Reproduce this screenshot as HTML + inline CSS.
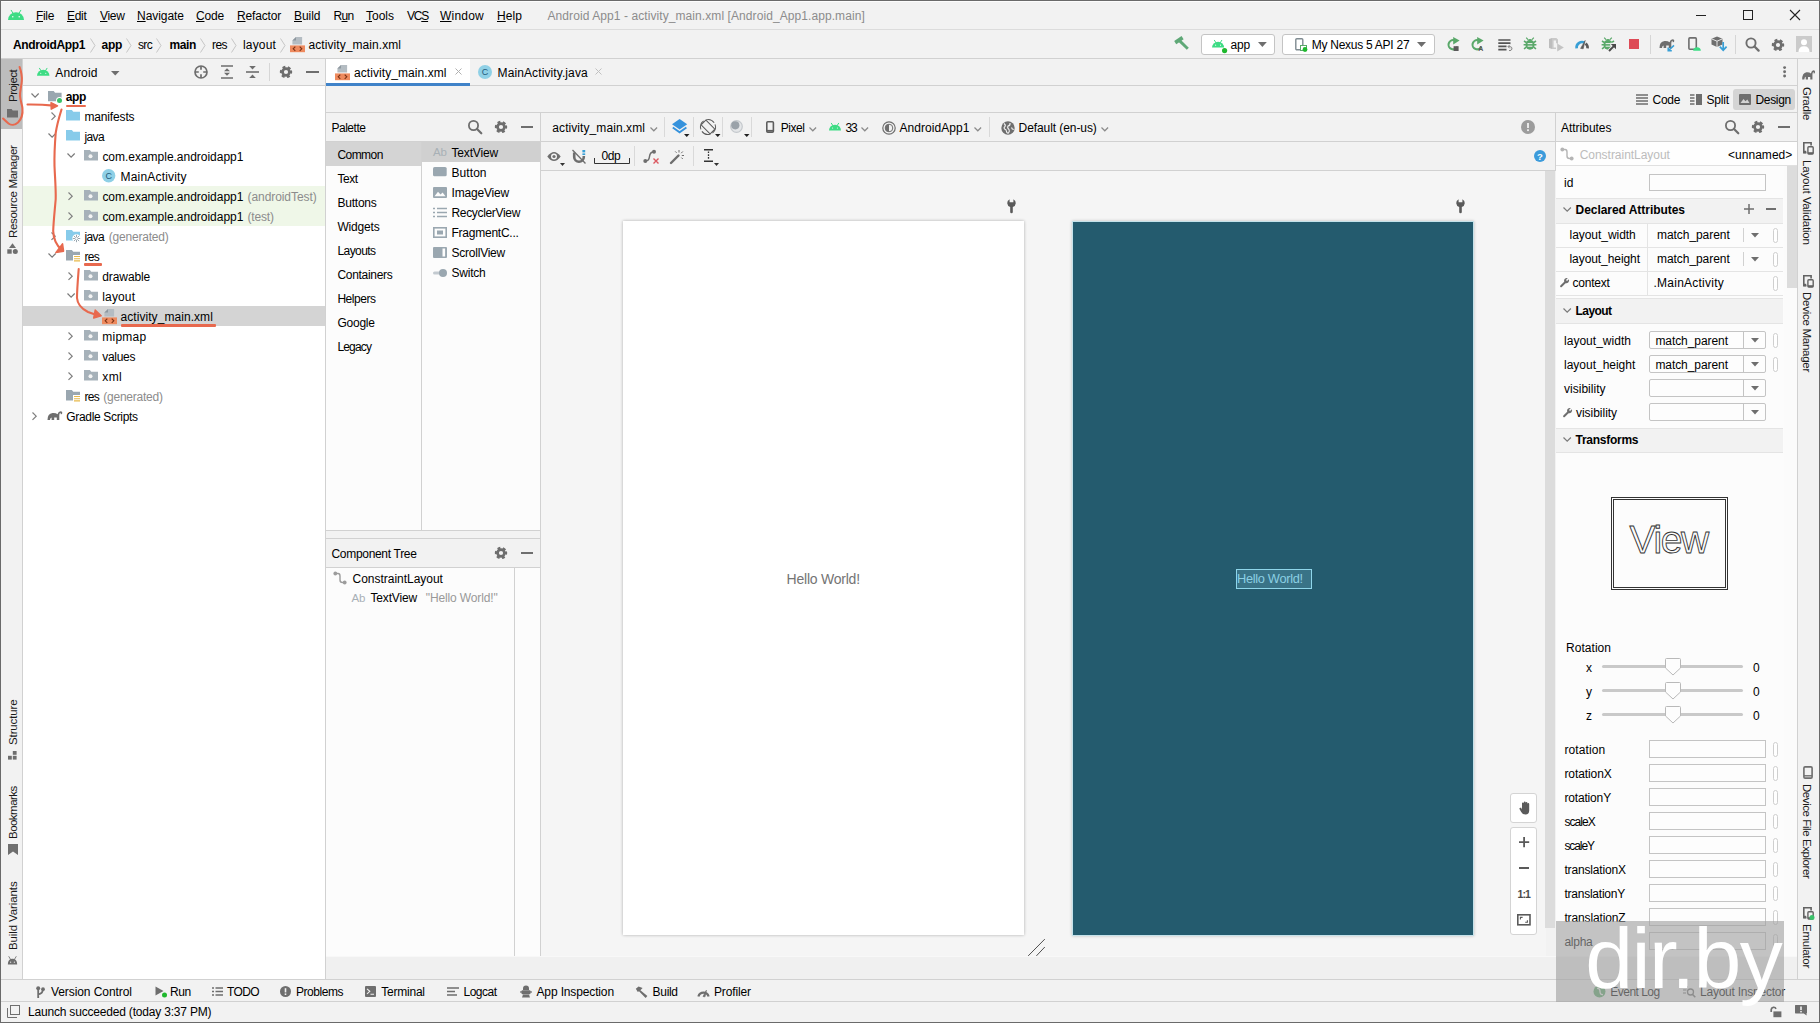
<!DOCTYPE html>
<html><head><meta charset="utf-8"><title>Android App1</title><style>
html,body{margin:0;padding:0}
body{width:1820px;height:1023px;overflow:hidden;position:relative;background:#f2f2f2;font-family:"Liberation Sans", sans-serif;font-size:12px}
#r{position:absolute;left:0;top:0;width:1820px;height:1023px;overflow:hidden}
#r div,#r span,#r svg{position:absolute}
#r span{white-space:pre}
#r svg{overflow:visible}
</style></head><body><div id="r">
<div style="left:0px;top:0px;width:1820px;height:1023px;background:#f2f2f2"></div>
<div style="left:23px;top:86px;width:302px;height:894px;background:#fff"></div>
<div style="left:541px;top:171px;width:1005px;height:785px;background:#f5f5f5"></div>
<div style="left:326px;top:141px;width:214px;height:390px;background:#fcfcfc"></div>
<div style="left:326px;top:568px;width:214px;height:388px;background:#fcfcfc"></div>
<div style="left:1556px;top:141px;width:241px;height:815px;background:#fcfcfc"></div>
<div style="left:1px;top:1px;width:1818px;height:1px;background:#fdfdfd"></div>
<div style="left:1px;top:29px;width:1818px;height:1px;background:#dcdcdc"></div>
<div style="left:1px;top:58px;width:1818px;height:1px;background:#d1d1d1"></div>
<div style="left:23px;top:85px;width:302px;height:1px;background:#d1d1d1"></div>
<div style="left:326px;top:85px;width:1471px;height:1px;background:#d1d1d1"></div>
<div style="left:326px;top:112px;width:1471px;height:1px;background:#d1d1d1"></div>
<div style="left:326px;top:141px;width:1230px;height:1px;background:#d1d1d1"></div>
<div style="left:1556px;top:141px;width:241px;height:1px;background:#d1d1d1"></div>
<div style="left:541px;top:170px;width:1015px;height:1px;background:#d1d1d1"></div>
<div style="left:326px;top:530px;width:214px;height:1px;background:#d1d1d1"></div>
<div style="left:326px;top:538px;width:214px;height:1px;background:#d1d1d1"></div>
<div style="left:326px;top:567px;width:214px;height:1px;background:#d1d1d1"></div>
<div style="left:1px;top:979px;width:1818px;height:1px;background:#d1d1d1"></div>
<div style="left:1px;top:1001px;width:1818px;height:1px;background:#d1d1d1"></div>
<div style="left:22px;top:58px;width:1px;height:922px;background:#d1d1d1"></div>
<div style="left:325px;top:58px;width:1px;height:922px;background:#d1d1d1"></div>
<div style="left:540px;top:113px;width:1px;height:843px;background:#d1d1d1"></div>
<div style="left:421px;top:141px;width:1px;height:390px;background:#d1d1d1"></div>
<div style="left:514px;top:568px;width:1px;height:388px;background:#d1d1d1"></div>
<div style="left:1555px;top:113px;width:1px;height:58px;background:#d1d1d1"></div>
<div style="left:1797px;top:58px;width:1px;height:922px;background:#d1d1d1"></div>
<svg style="left:8px;top:10px" width="16" height="9.92" viewBox="0 0 16 9.92" ><path d="M0 9.92 A8.0 7.7376000000000005 0 0 1 16 9.92 Z" fill="#3ddc84"/><path d="M3.2 0.3 L5.12 3.472 M12.8 0.3 L10.88 3.472" stroke="#3ddc84" stroke-width="1" stroke-linecap="round"/><circle cx="4.8" cy="6.7456000000000005" r="0.72" fill="#fff"/><circle cx="11.2" cy="6.7456000000000005" r="0.72" fill="#fff"/></svg>
<span style="left:36px;top:9.8px;font-size:12px;line-height:12px;color:#000;letter-spacing:-0.34px;"><u>F</u>ile</span>
<span style="left:67px;top:9.8px;font-size:12px;line-height:12px;color:#000;letter-spacing:-0.30px;"><u>E</u>dit</span>
<span style="left:100px;top:9.8px;font-size:12px;line-height:12px;color:#000;letter-spacing:-0.32px;"><u>V</u>iew</span>
<span style="left:137px;top:9.8px;font-size:12px;line-height:12px;color:#000;letter-spacing:-0.05px;"><u>N</u>avigate</span>
<span style="left:196px;top:9.8px;font-size:12px;line-height:12px;color:#000;letter-spacing:-0.17px;"><u>C</u>ode</span>
<span style="left:237px;top:9.8px;font-size:12px;line-height:12px;color:#000;letter-spacing:-0.17px;"><u>R</u>efactor</span>
<span style="left:294px;top:9.8px;font-size:12px;line-height:12px;color:#000;letter-spacing:-0.04px;"><u>B</u>uild</span>
<span style="left:333.5px;top:9.8px;font-size:12px;line-height:12px;color:#000;letter-spacing:-0.67px;">R<u>u</u>n</span>
<span style="left:366px;top:9.8px;font-size:12px;line-height:12px;color:#000;letter-spacing:-0.00px;"><u>T</u>ools</span>
<span style="left:407px;top:9.8px;font-size:12px;line-height:12px;color:#000;letter-spacing:-1.20px;">VC<u>S</u></span>
<span style="left:440px;top:9.8px;font-size:12px;line-height:12px;color:#000;letter-spacing:0.22px;"><u>W</u>indow</span>
<span style="left:497px;top:9.8px;font-size:12px;line-height:12px;color:#000;letter-spacing:0.08px;"><u>H</u>elp</span>
<span style="left:547.5px;top:9.8px;font-size:12px;line-height:12px;color:#8c8c8c;letter-spacing:0.08px;">Android App1 - activity_main.xml [Android_App1.app.main]</span>
<div style="left:1696px;top:15px;width:10px;height:1px;background:#222"></div>
<div style="left:1743px;top:10px;width:10px;height:10px;border:1px solid #222;box-sizing:border-box"></div>
<svg style="left:1790px;top:10px" width="10" height="10" viewBox="0 0 10 10" ><path d="M0 0 L10 10 M10 0 L0 10" stroke="#222" stroke-width="1.1"/></svg>
<span style="left:13px;top:38.8px;font-size:12px;line-height:12px;color:#000;letter-spacing:-0.36px;font-weight:bold;">AndroidApp1</span>
<span style="left:101.5px;top:38.8px;font-size:12px;line-height:12px;color:#000;letter-spacing:-0.28px;font-weight:bold;">app</span>
<span style="left:138px;top:38.8px;font-size:12px;line-height:12px;color:#000;letter-spacing:-0.67px;">src</span>
<span style="left:169.5px;top:38.8px;font-size:12px;line-height:12px;color:#000;letter-spacing:-0.38px;font-weight:bold;">main</span>
<span style="left:212px;top:38.8px;font-size:12px;line-height:12px;color:#000;letter-spacing:-0.56px;">res</span>
<span style="left:243px;top:38.8px;font-size:12px;line-height:12px;color:#000;letter-spacing:0.16px;">layout</span>
<span style="left:308.5px;top:38.8px;font-size:12px;line-height:12px;color:#000;letter-spacing:0.07px;">activity_main.xml</span>
<svg style="left:90px;top:37.5px" width="6" height="15" viewBox="0 0 6 15" ><path d="M0.5 0.5 L5 7.5 L0.5 14.5" fill="none" stroke="#c6c6c6" stroke-width="1"/></svg>
<svg style="left:125.5px;top:37.5px" width="6" height="15" viewBox="0 0 6 15" ><path d="M0.5 0.5 L5 7.5 L0.5 14.5" fill="none" stroke="#c6c6c6" stroke-width="1"/></svg>
<svg style="left:156px;top:37.5px" width="6" height="15" viewBox="0 0 6 15" ><path d="M0.5 0.5 L5 7.5 L0.5 14.5" fill="none" stroke="#c6c6c6" stroke-width="1"/></svg>
<svg style="left:200px;top:37.5px" width="6" height="15" viewBox="0 0 6 15" ><path d="M0.5 0.5 L5 7.5 L0.5 14.5" fill="none" stroke="#c6c6c6" stroke-width="1"/></svg>
<svg style="left:230.5px;top:37.5px" width="6" height="15" viewBox="0 0 6 15" ><path d="M0.5 0.5 L5 7.5 L0.5 14.5" fill="none" stroke="#c6c6c6" stroke-width="1"/></svg>
<svg style="left:280px;top:37.5px" width="6" height="15" viewBox="0 0 6 15" ><path d="M0.5 0.5 L5 7.5 L0.5 14.5" fill="none" stroke="#c6c6c6" stroke-width="1"/></svg>
<svg style="left:290px;top:36.5px" width="15" height="15.2" viewBox="0 0 15 15.2" ><path d="M6 0 H12.1 V7.4 H2.4 V3.6 Z" fill="#b4bcc2"/><path d="M6 0 V3.6 H2.4 Z" fill="#8d979e"/><rect x="0" y="8.4" width="15" height="6.8" fill="#ee8a5e"/><path d="M5.3 9.7 L3.2 11.8 L5.3 13.9 M9.7 9.7 L11.8 11.8 L9.7 13.9" stroke="#7a3114" stroke-width="1.1" fill="none"/></svg>
<svg style="left:1173px;top:36px" width="17" height="15" viewBox="0 0 17 15" ><path d="M2.2 6.6 L9.6 1.6" stroke="#5fa877" stroke-width="3.7"/><path d="M6.4 4.6 L14.8 12.8" stroke="#5fa877" stroke-width="2.9"/></svg>
<div style="left:1201px;top:34px;width:74px;height:21px;background:#fff;border:1px solid #c4c4c4;border-radius:3px;box-sizing:border-box"></div>
<svg style="left:1212px;top:40.2px" width="12.2" height="7.563999999999999" viewBox="0 0 12.2 7.563999999999999" ><path d="M0 7.563999999999999 A6.1 5.89992 0 0 1 12.2 7.563999999999999 Z" fill="#3ddc84"/><path d="M2.44 0.3 L3.904 2.6473999999999998 M9.76 0.3 L8.296 2.6473999999999998" stroke="#3ddc84" stroke-width="1" stroke-linecap="round"/><circle cx="3.6599999999999997" cy="5.14352" r="0.5489999999999999" fill="#fff"/><circle cx="8.54" cy="5.14352" r="0.5489999999999999" fill="#fff"/></svg>
<svg style="left:1221.8px;top:47.6px" width="5.2" height="5.2" viewBox="0 0 5.2 5.2" ><circle cx="2.6" cy="2.6" r="2.6" fill="#1fb82e"/></svg>
<span style="left:1230.6px;top:38.8px;font-size:12px;line-height:12px;color:#000;letter-spacing:-0.21px;">app</span>
<svg style="left:1257.6px;top:42.05px" width="8.8" height="4.9" viewBox="0 0 8.8 4.9" ><path d="M0 0 H8.8 L4.4 4.9 Z" fill="#6e6e6e"/></svg>
<div style="left:1282px;top:34px;width:153px;height:21px;background:#fff;border:1px solid #c4c4c4;border-radius:3px;box-sizing:border-box"></div>
<svg style="left:1295px;top:38px" width="13" height="14" viewBox="0 0 13 14" ><rect x="0.8" y="0.8" width="7" height="11" rx="1" fill="none" stroke="#7f8b91" stroke-width="1.4"/><rect x="5.5" y="7.5" width="6" height="5" fill="#fff" stroke="#59a869" stroke-width="1"/><circle cx="10" cy="11.5" r="2.4" fill="#1fb82e"/></svg>
<span style="left:1311.7px;top:38.8px;font-size:12px;line-height:12px;color:#000;letter-spacing:-0.26px;">My Nexus 5 API 27</span>
<svg style="left:1416.5px;top:42.0px" width="9" height="5" viewBox="0 0 9 5" ><path d="M0 0 H9 L4.5 5 Z" fill="#6e6e6e"/></svg>
<svg style="left:1446px;top:37px" width="15" height="14" viewBox="0 0 15 14" ><path d="M8 3.2 A4.6 4.6 0 1 0 11.3 9.6" fill="none" stroke="#59a869" stroke-width="2.1"/><path d="M7.2 0 L13.6 3.6 L7.2 7.4 Z" fill="#59a869"/><rect x="7.6" y="9.2" width="5" height="4.8" fill="#5a5a5a"/></svg>
<svg style="left:1470px;top:37px" width="15" height="14" viewBox="0 0 15 14" ><path d="M8 3.2 A4.6 4.6 0 1 0 11.3 9.6" fill="none" stroke="#59a869" stroke-width="2.1"/><path d="M7.2 0 L13.6 3.6 L7.2 7.4 Z" fill="#59a869"/><text x="8.2" y="14" font-size="7" font-weight="bold" fill="#5a5a5a" font-family='"Liberation Sans",sans-serif'>A</text></svg>
<svg style="left:1497.5px;top:38.8px" width="15" height="13" viewBox="0 0 15 13" ><path d="M0.3 1 H12.5 M0.3 4.2 H12.5 M0.3 7.4 H8.5 M0.3 10.6 H8.5" stroke="#555" stroke-width="1.7"/><path d="M10.2 7.6 H12 Q14.2 7.8 14 10 Q13.6 11.8 11 11.6 M11.8 5.8 L10 7.6 L11.8 9.4" fill="none" stroke="#777" stroke-width="0.9"/></svg>
<svg style="left:1523.3px;top:37px" width="14" height="14" viewBox="0 0 14 14" ><ellipse cx="7" cy="7.8" rx="4.5" ry="4.9" fill="#59a869"/><path d="M4.3 3.4 Q7 0.6 9.7 3.4 Z" fill="#59a869"/><path d="M3.2 0.6 L5 2.6 M10.8 0.6 L9 2.6" stroke="#59a869" stroke-width="1.2"/><path d="M1 4 L3.4 5.6 M13 4 L10.6 5.6 M0.6 7.8 H3 M13.4 7.8 H11 M1 11.8 L3.4 10.2 M13 11.8 L10.6 10.2" stroke="#59a869" stroke-width="1.6"/><path d="M4.6 6.6 H9.4 M4.6 9.2 H9.4" stroke="#f2f2f2" stroke-width="1"/></svg>
<svg style="left:1549px;top:38px" width="15" height="14" viewBox="0 0 15 14" ><path d="M0 1 L3 0 V11 L0 10 Z" fill="#bdbdbd"/><path d="M3 0 H7.4 L9 1.6 V6 L7 5 V2.4 H4.6 V9.6 H7 V11 H3 Z" fill="#c9c9c9"/><path d="M8.2 5.6 L14.8 9.6 L8.2 13.6 Z" fill="#c4c4c4"/></svg>
<svg style="left:1575px;top:39px" width="14" height="10" viewBox="0 0 14 10" ><path d="M1.6 9.4 A5.6 5.6 0 0 1 9.6 3.6" fill="none" stroke="#389fd6" stroke-width="2.6"/><path d="M10.6 4.4 A5.6 5.6 0 0 1 12.6 9.4" fill="none" stroke="#5a5a5a" stroke-width="2.6"/><path d="M5.6 9.4 L10.2 1.4 L8.2 9.8 Z" fill="#5a5a5a" stroke="#5a5a5a" stroke-width="0.6"/></svg>
<svg style="left:1601.3px;top:37px" width="14" height="14" viewBox="0 0 14 14" ><ellipse cx="7" cy="7.8" rx="4.5" ry="4.9" fill="#59a869"/><path d="M4.3 3.4 Q7 0.6 9.7 3.4 Z" fill="#59a869"/><path d="M3.2 0.6 L5 2.6 M10.8 0.6 L9 2.6" stroke="#59a869" stroke-width="1.2"/><path d="M1 4 L3.4 5.6 M13 4 L10.6 5.6 M0.6 7.8 H3 M13.4 7.8 H11 M1 11.8 L3.4 10.2 M13 11.8 L10.6 10.2" stroke="#59a869" stroke-width="1.6"/><path d="M4.6 6.6 H9.4 M4.6 9.2 H9.4" stroke="#f2f2f2" stroke-width="1"/></svg>
<svg style="left:1608px;top:43px" width="9" height="9" viewBox="0 0 9 9" ><path d="M1 8 L7.4 1.6 V6.8 M7.4 1.6 H2.2" stroke="#f2f2f2" stroke-width="3.6" fill="none"/><path d="M1 8 L6.6 2.4" stroke="#4a4a4a" stroke-width="2"/><path d="M2.8 1 H8 V6.2 Z" fill="#4a4a4a"/></svg>
<div style="left:1629.2px;top:39px;width:9.8px;height:9.8px;background:#de4a56"></div>
<div style="left:1650px;top:35px;width:1px;height:19px;background:#d6d6d6"></div>
<svg style="left:1659px;top:37px" width="16" height="14" viewBox="0 0 16 14" ><path d="M0.5 11 Q0.5 4.5 5.5 4 Q9 3.8 10.5 5.2 Q11.5 2 14 2.2 Q15.8 2.6 15.2 4.6 Q14.6 5.6 13.6 5 Q13.9 3.8 13.2 3.8 Q12.3 4.2 12.3 6.5 V11 H9.8 V8.6 H7.2 V11 H4.6 V8.4 Q3.2 8.6 3 11 Z" fill="#6e6e6e"/><path d="M9.6 13.4 L15 8.4 M9.2 10.4 V13.8 H12.8" stroke="#389fd6" stroke-width="1.5" fill="none"/></svg>
<svg style="left:1688px;top:37px" width="13" height="14" viewBox="0 0 13 14" ><rect x="0.9" y="0.9" width="7.4" height="11.4" rx="1" fill="none" stroke="#6e6e6e" stroke-width="1.6"/><path d="M5.2 13.8 A3.8 3.6 0 0 1 12.8 13.8 Z" fill="#3ddc84"/></svg>
<svg style="left:1711px;top:36px" width="16" height="16" viewBox="0 0 16 16" ><path d="M6 0.5 L11.5 2.8 V8.6 L6 11 L0.5 8.6 V2.8 Z" fill="#6e6e6e"/><path d="M0.5 2.8 L6 5.2 L11.5 2.8 M6 5.2 V11" stroke="#f2f2f2" stroke-width="0.9" fill="none"/><path d="M12.2 6 V14 M8.8 10.6 L12.2 14.2 L15.6 10.6" stroke="#389fd6" stroke-width="1.7" fill="none"/></svg>
<div style="left:1735px;top:35px;width:1px;height:19px;background:#d6d6d6"></div>
<svg style="left:1745px;top:37px" width="15" height="15" viewBox="0 0 15 15" ><circle cx="6" cy="6" r="4.6" fill="none" stroke="#6e6e6e" stroke-width="1.9"/><path d="M9.5 9.5 L13.6 13.6" stroke="#6e6e6e" stroke-width="2.3" stroke-linecap="round"/></svg>
<svg style="left:1770px;top:36.5px" width="16" height="16" viewBox="0 0 16 16" ><g transform="translate(8 8) scale(1.0)"><circle r="3.45" fill="none" stroke="#6e6e6e" stroke-width="2.7"/><circle r="5.05" fill="none" stroke="#6e6e6e" stroke-width="2.3" stroke-dasharray="2.9 2.388" transform="rotate(-16.5)"/></g></svg>
<svg style="left:1796px;top:36px" width="16" height="16" viewBox="0 0 16 16" ><rect width="16" height="16" fill="#cbcbcb"/><circle cx="8" cy="6.2" r="3" fill="#fff"/><path d="M2.5 16 Q2.5 10.2 8 10.2 Q13.5 10.2 13.5 16 Z" fill="#fff"/></svg>
<div style="left:1px;top:59px;width:21px;height:70px;background:#bdbdbd"></div>
<div style="left:13.2px;top:102.4px;width:0;height:0;transform:rotate(-90deg);transform-origin:0 0"><span style="left:0;top:-6px;font-size:11.5px;line-height:12px;color:#1a1a1a;white-space:pre;letter-spacing:-0.51px">Project</span></div>
<svg style="left:7px;top:109.3px" width="11" height="8.6" viewBox="0 0 11 8.6" ><path d="M0 0 H4.62 L5.720000000000001 1.5479999999999998 H11 V8.6 H0 Z" fill="#6e6e6e"/></svg>
<div style="left:13.2px;top:237.5px;width:0;height:0;transform:rotate(-90deg);transform-origin:0 0"><span style="left:0;top:-6px;font-size:11.5px;line-height:12px;color:#1a1a1a;white-space:pre;letter-spacing:-0.33px">Resource Manager</span></div>
<svg style="left:7px;top:243px" width="11" height="11" viewBox="0 0 11 11" ><path d="M5.5 0.3 L9 5 H2 Z" fill="#6e6e6e"/><rect x="0.3" y="6.3" width="4.4" height="4.4" fill="#6e6e6e"/><circle cx="8.3" cy="8.5" r="2.5" fill="#6e6e6e"/></svg>
<div style="left:13.2px;top:745px;width:0;height:0;transform:rotate(-90deg);transform-origin:0 0"><span style="left:0;top:-6px;font-size:11.5px;line-height:12px;color:#1a1a1a;white-space:pre;letter-spacing:-0.12px">Structure</span></div>
<svg style="left:8px;top:751px" width="10" height="9" viewBox="0 0 10 9" ><rect x="4.8" y="0" width="3.8" height="3.8" fill="#6e6e6e"/><rect x="0" y="4.8" width="3.8" height="3.8" fill="#6e6e6e"/><rect x="4.8" y="4.8" width="3.8" height="3.8" fill="#6e6e6e"/></svg>
<div style="left:13.2px;top:838.8px;width:0;height:0;transform:rotate(-90deg);transform-origin:0 0"><span style="left:0;top:-6px;font-size:11.5px;line-height:12px;color:#1a1a1a;white-space:pre;letter-spacing:-0.53px">Bookmarks</span></div>
<svg style="left:8px;top:844px" width="10" height="11" viewBox="0 0 10 11" ><path d="M0 0 H10 V11 L5 7.5 L0 11 Z" fill="#6e6e6e"/></svg>
<div style="left:13.2px;top:950px;width:0;height:0;transform:rotate(-90deg);transform-origin:0 0"><span style="left:0;top:-6px;font-size:11.5px;line-height:12px;color:#1a1a1a;white-space:pre;letter-spacing:-0.11px">Build Variants</span></div>
<svg style="left:7px;top:956px" width="11" height="8.5" viewBox="0 0 11 10" ><path d="M0 10 Q0 3.2 5.5 3.2 Q11 3.2 11 10 Z" fill="#6e6e6e"/><path d="M1 0.3 L3.2 4 M10 0.3 L7.8 4" stroke="#6e6e6e" stroke-width="1"/><circle cx="3.3" cy="7.3" r="0.7" fill="#f2f2f2"/><circle cx="7.7" cy="7.3" r="0.7" fill="#f2f2f2"/></svg>
<svg style="left:36.5px;top:68px" width="12.5" height="7.75" viewBox="0 0 12.5 7.75" ><path d="M0 7.75 A6.25 6.045 0 0 1 12.5 7.75 Z" fill="#3ddc84"/><path d="M2.5 0.3 L4.0 2.7125 M10.0 0.3 L8.5 2.7125" stroke="#3ddc84" stroke-width="1" stroke-linecap="round"/><circle cx="3.75" cy="5.2700000000000005" r="0.5625" fill="#fff"/><circle cx="8.75" cy="5.2700000000000005" r="0.5625" fill="#fff"/></svg>
<span style="left:55.3px;top:67.3px;font-size:12px;line-height:12px;color:#000;letter-spacing:0.12px;">Android</span>
<svg style="left:110.75px;top:71.0px" width="8.5" height="4.6" viewBox="0 0 8.5 4.6" ><path d="M0 0 H8.5 L4.25 4.6 Z" fill="#6e6e6e"/></svg>
<svg style="left:194px;top:64.8px" width="14" height="14" viewBox="0 0 14 14" ><circle cx="7" cy="7" r="6" fill="none" stroke="#6e6e6e" stroke-width="1.7"/><path d="M7 1 V4.8 M7 9.2 V13 M1 7 H4.8 M9.2 7 H13" stroke="#6e6e6e" stroke-width="1.7"/></svg>
<svg style="left:221px;top:65px" width="12" height="14" viewBox="0 0 12 14" ><path d="M0 1 H12 M0 13 H12" stroke="#6e6e6e" stroke-width="1.6"/><path d="M3 6.2 L6 3.2 L9 6.2 Z M3 7.8 L6 10.8 L9 7.8 Z" fill="#6e6e6e"/></svg>
<svg style="left:246px;top:65px" width="13" height="14" viewBox="0 0 13 14" ><path d="M0 7 H13" stroke="#6e6e6e" stroke-width="1.6"/><path d="M3.2 1 L6.5 4.6 L9.8 1 Z M3.2 13 L6.5 9.4 L9.8 13 Z" fill="#6e6e6e"/></svg>
<div style="left:269px;top:63px;width:1px;height:18px;background:#d6d6d6"></div>
<svg style="left:278px;top:64px" width="16" height="16" viewBox="0 0 16 16" ><g transform="translate(8 8) scale(1.0)"><circle r="3.45" fill="none" stroke="#6e6e6e" stroke-width="2.7"/><circle r="5.05" fill="none" stroke="#6e6e6e" stroke-width="2.3" stroke-dasharray="2.9 2.388" transform="rotate(-16.5)"/></g></svg>
<div style="left:305.5px;top:71px;width:13px;height:2px;background:#6e6e6e"></div>
<div style="left:23px;top:186px;width:302px;height:40px;background:#eff7e8"></div>
<div style="left:23px;top:306px;width:302px;height:20px;background:#d4d4d4"></div>
<svg style="left:30.5px;top:92.95px" width="8.2" height="5.1" viewBox="0 0 8.2 5.1" ><path d="M0.5 0.5 L4.1 4.1 L7.699999999999999 0.5" fill="none" stroke="#7a7a7a" stroke-width="1.2"/></svg>
<svg style="left:48px;top:91.3px" width="13.6" height="10.2" viewBox="0 0 13.6 10.2" ><path d="M0 0 H5.712 L7.072 1.8359999999999999 H13.6 V10.2 H0 Z" fill="#9aa7b0"/></svg>
<svg style="left:56px;top:97px" width="7" height="7" viewBox="0 0 7 7" ><circle cx="3.5" cy="3.5" r="3.5" fill="#fff"/><circle cx="3.5" cy="3.5" r="2.5" fill="#3bc26a"/></svg>
<span style="left:65.8px;top:90.8px;font-size:12px;line-height:12px;color:#000;letter-spacing:-0.38px;font-weight:bold;">app</span>
<svg style="left:50.6px;top:111.8px" width="5.2" height="8.4" viewBox="0 0 5.2 8.4" ><path d="M0.5 0.5 L4.2 4.2 L0.5 7.9" fill="none" stroke="#7f7f7f" stroke-width="1.2"/></svg>
<svg style="left:66.3px;top:110.3px" width="14" height="10.4" viewBox="0 0 14 10.4" ><path d="M0 0 H5.88 L7.28 1.8719999999999999 H14 V10.4 H0 Z" fill="#87cbea"/></svg>
<span style="left:84.4px;top:110.8px;font-size:12px;line-height:12px;color:#000;letter-spacing:-0.14px;">manifests</span>
<svg style="left:48.3px;top:132.95px" width="8.2" height="5.1" viewBox="0 0 8.2 5.1" ><path d="M0.5 0.5 L4.1 4.1 L7.699999999999999 0.5" fill="none" stroke="#7a7a7a" stroke-width="1.2"/></svg>
<svg style="left:66.3px;top:130.3px" width="14" height="10.4" viewBox="0 0 14 10.4" ><path d="M0 0 H5.88 L7.28 1.8719999999999999 H14 V10.4 H0 Z" fill="#87cbea"/></svg>
<span style="left:84.4px;top:130.8px;font-size:12px;line-height:12px;color:#000;letter-spacing:-0.60px;">java</span>
<svg style="left:66.5px;top:152.95px" width="8.2" height="5.1" viewBox="0 0 8.2 5.1" ><path d="M0.5 0.5 L4.1 4.1 L7.699999999999999 0.5" fill="none" stroke="#7a7a7a" stroke-width="1.2"/></svg>
<svg style="left:84px;top:150.3px" width="14" height="10.4" viewBox="0 0 14 10.4" ><path d="M0 0 H5.88 L7.28 1.8719999999999999 H14 V10.4 H0 Z" fill="#a6b1b9"/></svg>
<svg style="left:84px;top:150.3px" width="14" height="11" viewBox="0 0 14 11" ><circle cx="6.5" cy="6.3" r="2" fill="#f4f4f4"/></svg>
<span style="left:102.4px;top:150.8px;font-size:12px;line-height:12px;color:#000;letter-spacing:-0.02px;">com.example.androidapp1</span>
<svg style="left:102.4px;top:169.3px" width="13.4" height="13.4" viewBox="0 0 13.4 13.4" ><circle cx="6.7" cy="6.7" r="6.7" fill="#8fd0e6"/><text x="6.7" y="9.9" font-size="9" text-anchor="middle" fill="#235a7a" font-family='"Liberation Sans",sans-serif'>C</text></svg>
<span style="left:120.5px;top:170.8px;font-size:12px;line-height:12px;color:#000;letter-spacing:0.19px;">MainActivity</span>
<svg style="left:67.9px;top:191.8px" width="5.2" height="8.4" viewBox="0 0 5.2 8.4" ><path d="M0.5 0.5 L4.2 4.2 L0.5 7.9" fill="none" stroke="#7f7f7f" stroke-width="1.2"/></svg>
<svg style="left:84px;top:190.3px" width="14" height="10.4" viewBox="0 0 14 10.4" ><path d="M0 0 H5.88 L7.28 1.8719999999999999 H14 V10.4 H0 Z" fill="#a6b1b9"/></svg>
<svg style="left:84px;top:190.3px" width="14" height="11" viewBox="0 0 14 11" ><circle cx="6.5" cy="6.3" r="2" fill="#f4f4f4"/></svg>
<span style="left:102.4px;top:190.8px;font-size:12px;line-height:12px;color:#000;letter-spacing:-0.02px;">com.example.androidapp1</span>
<span style="left:247.5px;top:190.8px;font-size:12px;line-height:12px;color:#8c8c8c;letter-spacing:-0.07px;">(androidTest)</span>
<svg style="left:67.9px;top:211.8px" width="5.2" height="8.4" viewBox="0 0 5.2 8.4" ><path d="M0.5 0.5 L4.2 4.2 L0.5 7.9" fill="none" stroke="#7f7f7f" stroke-width="1.2"/></svg>
<svg style="left:84px;top:210.3px" width="14" height="10.4" viewBox="0 0 14 10.4" ><path d="M0 0 H5.88 L7.28 1.8719999999999999 H14 V10.4 H0 Z" fill="#a6b1b9"/></svg>
<svg style="left:84px;top:210.3px" width="14" height="11" viewBox="0 0 14 11" ><circle cx="6.5" cy="6.3" r="2" fill="#f4f4f4"/></svg>
<span style="left:102.4px;top:210.8px;font-size:12px;line-height:12px;color:#000;letter-spacing:-0.02px;">com.example.androidapp1</span>
<span style="left:247.5px;top:210.8px;font-size:12px;line-height:12px;color:#8c8c8c;letter-spacing:-0.19px;">(test)</span>
<svg style="left:50.6px;top:231.8px" width="5.2" height="8.4" viewBox="0 0 5.2 8.4" ><path d="M0.5 0.5 L4.2 4.2 L0.5 7.9" fill="none" stroke="#7f7f7f" stroke-width="1.2"/></svg>
<svg style="left:66.3px;top:230.3px" width="14" height="10.4" viewBox="0 0 14 10.4" ><path d="M0 0 H5.88 L7.28 1.8719999999999999 H14 V10.4 H0 Z" fill="#87cbea"/></svg>
<svg style="left:72px;top:234px" width="9" height="9" viewBox="0 0 9 9" ><circle cx="4.5" cy="4.5" r="4.2" fill="#fff"/><path d="M4.5 0.8 V8.2 M0.8 4.5 H8.2 M1.9 1.9 L7.1 7.1 M7.1 1.9 L1.9 7.1" stroke="#9aa7b0" stroke-width="1"/><circle cx="4.5" cy="4.5" r="1.2" fill="#fff"/></svg>
<span style="left:84.4px;top:230.8px;font-size:12px;line-height:12px;color:#000;letter-spacing:-0.60px;">java</span>
<span style="left:108.7px;top:230.8px;font-size:12px;line-height:12px;color:#8c8c8c;letter-spacing:-0.20px;">(generated)</span>
<svg style="left:48.3px;top:252.95px" width="8.2" height="5.1" viewBox="0 0 8.2 5.1" ><path d="M0.5 0.5 L4.1 4.1 L7.699999999999999 0.5" fill="none" stroke="#7a7a7a" stroke-width="1.2"/></svg>
<svg style="left:66.3px;top:250.3px" width="14" height="10.4" viewBox="0 0 14 10.4" ><path d="M0 0 H5.88 L7.28 1.8719999999999999 H14 V10.4 H0 Z" fill="#9aa7b0"/></svg>
<svg style="left:73.3px;top:255.3px" width="7" height="7" viewBox="0 0 7 7" ><rect width="7" height="7" fill="#fff"/><path d="M1 1.5 H7 M1 3.7 H7 M1 5.9 H7" stroke="#e8b94a" stroke-width="1.1"/></svg>
<span style="left:84.4px;top:250.8px;font-size:12px;line-height:12px;color:#000;letter-spacing:-0.62px;">res</span>
<svg style="left:67.9px;top:271.8px" width="5.2" height="8.4" viewBox="0 0 5.2 8.4" ><path d="M0.5 0.5 L4.2 4.2 L0.5 7.9" fill="none" stroke="#7f7f7f" stroke-width="1.2"/></svg>
<svg style="left:84px;top:270.3px" width="14" height="10.4" viewBox="0 0 14 10.4" ><path d="M0 0 H5.88 L7.28 1.8719999999999999 H14 V10.4 H0 Z" fill="#a6b1b9"/></svg>
<svg style="left:84px;top:270.3px" width="14" height="11" viewBox="0 0 14 11" ><circle cx="6.5" cy="6.3" r="2" fill="#f4f4f4"/></svg>
<span style="left:102.3px;top:270.8px;font-size:12px;line-height:12px;color:#000;letter-spacing:-0.10px;">drawable</span>
<svg style="left:66.5px;top:292.95px" width="8.2" height="5.1" viewBox="0 0 8.2 5.1" ><path d="M0.5 0.5 L4.1 4.1 L7.699999999999999 0.5" fill="none" stroke="#7a7a7a" stroke-width="1.2"/></svg>
<svg style="left:84px;top:290.3px" width="14" height="10.4" viewBox="0 0 14 10.4" ><path d="M0 0 H5.88 L7.28 1.8719999999999999 H14 V10.4 H0 Z" fill="#a6b1b9"/></svg>
<svg style="left:84px;top:290.3px" width="14" height="11" viewBox="0 0 14 11" ><circle cx="6.5" cy="6.3" r="2" fill="#f4f4f4"/></svg>
<span style="left:102.3px;top:290.8px;font-size:12px;line-height:12px;color:#000;letter-spacing:0.14px;">layout</span>
<svg style="left:101.7px;top:308.5px" width="15" height="15.2" viewBox="0 0 15 15.2" ><path d="M6 0 H12.1 V7.4 H2.4 V3.6 Z" fill="#b4bcc2"/><path d="M6 0 V3.6 H2.4 Z" fill="#8d979e"/><rect x="0" y="8.4" width="15" height="6.8" fill="#ee8a5e"/><path d="M5.3 9.7 L3.2 11.8 L5.3 13.9 M9.7 9.7 L11.8 11.8 L9.7 13.9" stroke="#7a3114" stroke-width="1.1" fill="none"/></svg>
<span style="left:120.5px;top:310.8px;font-size:12px;line-height:12px;color:#000;letter-spacing:0.06px;">activity_main.xml</span>
<svg style="left:67.9px;top:331.8px" width="5.2" height="8.4" viewBox="0 0 5.2 8.4" ><path d="M0.5 0.5 L4.2 4.2 L0.5 7.9" fill="none" stroke="#7f7f7f" stroke-width="1.2"/></svg>
<svg style="left:84px;top:330.3px" width="14" height="10.4" viewBox="0 0 14 10.4" ><path d="M0 0 H5.88 L7.28 1.8719999999999999 H14 V10.4 H0 Z" fill="#a6b1b9"/></svg>
<svg style="left:84px;top:330.3px" width="14" height="11" viewBox="0 0 14 11" ><circle cx="6.5" cy="6.3" r="2" fill="#f4f4f4"/></svg>
<span style="left:102.3px;top:330.8px;font-size:12px;line-height:12px;color:#000;letter-spacing:0.24px;">mipmap</span>
<svg style="left:67.9px;top:351.8px" width="5.2" height="8.4" viewBox="0 0 5.2 8.4" ><path d="M0.5 0.5 L4.2 4.2 L0.5 7.9" fill="none" stroke="#7f7f7f" stroke-width="1.2"/></svg>
<svg style="left:84px;top:350.3px" width="14" height="10.4" viewBox="0 0 14 10.4" ><path d="M0 0 H5.88 L7.28 1.8719999999999999 H14 V10.4 H0 Z" fill="#a6b1b9"/></svg>
<svg style="left:84px;top:350.3px" width="14" height="11" viewBox="0 0 14 11" ><circle cx="6.5" cy="6.3" r="2" fill="#f4f4f4"/></svg>
<span style="left:102.3px;top:350.8px;font-size:12px;line-height:12px;color:#000;letter-spacing:-0.30px;">values</span>
<svg style="left:67.9px;top:371.8px" width="5.2" height="8.4" viewBox="0 0 5.2 8.4" ><path d="M0.5 0.5 L4.2 4.2 L0.5 7.9" fill="none" stroke="#7f7f7f" stroke-width="1.2"/></svg>
<svg style="left:84px;top:370.3px" width="14" height="10.4" viewBox="0 0 14 10.4" ><path d="M0 0 H5.88 L7.28 1.8719999999999999 H14 V10.4 H0 Z" fill="#a6b1b9"/></svg>
<svg style="left:84px;top:370.3px" width="14" height="11" viewBox="0 0 14 11" ><circle cx="6.5" cy="6.3" r="2" fill="#f4f4f4"/></svg>
<span style="left:102.3px;top:370.8px;font-size:12px;line-height:12px;color:#000;letter-spacing:0.34px;">xml</span>
<svg style="left:66.3px;top:390.3px" width="14" height="10.4" viewBox="0 0 14 10.4" ><path d="M0 0 H5.88 L7.28 1.8719999999999999 H14 V10.4 H0 Z" fill="#9aa7b0"/></svg>
<svg style="left:73.3px;top:395.3px" width="7" height="7" viewBox="0 0 7 7" ><rect width="7" height="7" fill="#fff"/><path d="M1 1.5 H7 M1 3.7 H7 M1 5.9 H7" stroke="#e8b94a" stroke-width="1.1"/></svg>
<span style="left:84.5px;top:390.8px;font-size:12px;line-height:12px;color:#000;letter-spacing:-0.66px;">res</span>
<span style="left:103.3px;top:390.8px;font-size:12px;line-height:12px;color:#8c8c8c;letter-spacing:-0.24px;">(generated)</span>
<svg style="left:31.9px;top:411.8px" width="5.2" height="8.4" viewBox="0 0 5.2 8.4" ><path d="M0.5 0.5 L4.2 4.2 L0.5 7.9" fill="none" stroke="#7f7f7f" stroke-width="1.2"/></svg>
<svg style="left:47px;top:410px" width="16" height="12" viewBox="0 1 16 12" ><path d="M0.5 11 Q0.5 4.5 5.5 4 Q9 3.8 10.5 5.2 Q11.5 2 14 2.2 Q15.8 2.6 15.2 4.6 Q14.6 5.6 13.6 5 Q13.9 3.8 13.2 3.8 Q12.3 4.2 12.3 6.5 V11 H9.8 V8.6 H7.2 V11 H4.6 V8.4 Q3.2 8.6 3 11 Z" fill="#6e6e6e"/></svg>
<span style="left:66.3px;top:410.8px;font-size:12px;line-height:12px;color:#000;letter-spacing:-0.33px;">Gradle Scripts</span>
<div style="left:65.7px;top:104.7px;width:20.8px;height:2.7px;background:#e8694e;border-radius:1px"></div>
<div style="left:83.8px;top:263.3px;width:18.2px;height:3.2px;background:#e8694e;border-radius:1px"></div>
<div style="left:121px;top:323.6px;width:95px;height:3px;background:#e8694e;border-radius:1px"></div>
<svg style="left:0px;top:58px" width="130" height="280" viewBox="0 0 130 280" ><g fill="none" stroke="#e8694e" stroke-width="2.1" stroke-linecap="round" stroke-linejoin="round"><path d="M19.6 9 C21 13 22.2 18 21.8 23 C21.2 30 19.8 33 20 38 C20.3 43 22 46 22.4 50 C23 56 22.5 60 18 64.5 C15 67 11 67.5 8.5 65.5 C6 63.5 4.5 62 3.1 60.6"/><path d="M27.5 46.5 Q40 46.3 54 47.6"/><path d="M51 44.6 L57.6 47.8 L51.2 51.2 Z" fill="#e8694e" stroke-width="1.4"/><path d="M61.5 51.5 C59.5 58 57 66 55.7 75 C54.5 90 54.3 100 54.5 108 C55 120 56 132 55.7 141 C55 150 53.5 163 53.2 173 C53.5 181 56 187 61.5 191.5"/><path d="M62.6 185.8 L63.6 193.2 L55.8 194.6 Z" fill="#e8694e" stroke-width="1.4"/><path d="M78.7 211 C78 220 77 232 77 240 C77.5 247 82 251 88 254 Q93 256 98 257.3"/><path d="M95.2 252 L101.2 257.8 L93.7 260 Z" fill="#e8694e" stroke-width="1.4"/></g></svg>
<div style="left:326px;top:59px;width:144px;height:24px;background:#fff"></div>
<div style="left:326px;top:83px;width:144px;height:3px;background:#4083c9"></div>
<svg style="left:335px;top:65.3px" width="15" height="15.2" viewBox="0 0 15 15.2" ><path d="M6 0 H12.1 V7.4 H2.4 V3.6 Z" fill="#b4bcc2"/><path d="M6 0 V3.6 H2.4 Z" fill="#8d979e"/><rect x="0" y="8.4" width="15" height="6.8" fill="#ee8a5e"/><path d="M5.3 9.7 L3.2 11.8 L5.3 13.9 M9.7 9.7 L11.8 11.8 L9.7 13.9" stroke="#7a3114" stroke-width="1.1" fill="none"/></svg>
<span style="left:354px;top:67.3px;font-size:12px;line-height:12px;color:#000;letter-spacing:0.07px;">activity_main.xml</span>
<svg style="left:454.5px;top:68px" width="7" height="7" viewBox="0 0 7 7" ><path d="M0.5 0.5 L6.5 6.5 M6.5 0.5 L0.5 6.5" stroke="#b0b0b0" stroke-width="1"/></svg>
<svg style="left:477.5px;top:65px" width="14" height="14" viewBox="0 0 14 14" ><circle cx="7.0" cy="7.0" r="7.0" fill="#8fd0e6"/><text x="7.0" y="10.2" font-size="9" text-anchor="middle" fill="#235a7a" font-family='"Liberation Sans",sans-serif'>C</text></svg>
<span style="left:497.6px;top:67.3px;font-size:12px;line-height:12px;color:#000;letter-spacing:0.10px;">MainActivity.java</span>
<svg style="left:595px;top:68px" width="7" height="7" viewBox="0 0 7 7" ><path d="M0.5 0.5 L6.5 6.5 M6.5 0.5 L0.5 6.5" stroke="#c0c0c0" stroke-width="1"/></svg>
<svg style="left:1783.4px;top:66.4px" width="3.2" height="11.6" viewBox="0 0 3.2 11.6" ><circle cx="1.6" cy="1.6" r="1.45" fill="#6e6e6e"/><circle cx="1.6" cy="5.8" r="1.45" fill="#6e6e6e"/><circle cx="1.6" cy="10" r="1.45" fill="#6e6e6e"/></svg>
<svg style="left:1636px;top:94px" width="12" height="11" viewBox="0 0 12 11" ><path d="M0 1 H12 M0 4 H12 M0 7 H12 M0 10 H12" stroke="#6e6e6e" stroke-width="1.4"/></svg>
<span style="left:1652.6px;top:94.1px;font-size:12px;line-height:12px;color:#000;letter-spacing:-0.32px;">Code</span>
<svg style="left:1690px;top:94px" width="12" height="11" viewBox="0 0 12 11" ><path d="M0 1 H4.5 M0 4 H4.5 M0 7 H4.5 M0 10 H4.5" stroke="#6e6e6e" stroke-width="1.4"/><rect x="6" y="0" width="6" height="11" fill="#6e6e6e"/></svg>
<span style="left:1706.5px;top:94.1px;font-size:12px;line-height:12px;color:#000;letter-spacing:-0.17px;">Split</span>
<div style="left:1733px;top:88.5px;width:62px;height:21px;background:#d4d4d4;border-radius:3px"></div>
<svg style="left:1739px;top:94px" width="12" height="11" viewBox="0 0 12 11" ><rect width="12" height="11" rx="1" fill="#6e6e6e"/><path d="M1.5 9 L4.5 5 L6.5 7.2 L8.3 5.6 L10.5 9 Z" fill="#d4d4d4"/></svg>
<span style="left:1755.4px;top:94.1px;font-size:12px;line-height:12px;color:#000;letter-spacing:-0.29px;">Design</span>
<span style="left:331.5px;top:121.6px;font-size:12px;line-height:12px;color:#000;letter-spacing:-0.49px;">Palette</span>
<svg style="left:467px;top:119px" width="16" height="16" viewBox="0 0 16 16" ><circle cx="6.5" cy="6.5" r="4.6" fill="none" stroke="#6e6e6e" stroke-width="1.8"/><path d="M10 10 L14.3 14.3" stroke="#6e6e6e" stroke-width="2.2" stroke-linecap="round"/></svg>
<svg style="left:493px;top:118.5px" width="16" height="16" viewBox="0 0 16 16" ><g transform="translate(8 8) scale(1.0)"><circle r="3.45" fill="none" stroke="#6e6e6e" stroke-width="2.7"/><circle r="5.05" fill="none" stroke="#6e6e6e" stroke-width="2.3" stroke-dasharray="2.9 2.388" transform="rotate(-16.5)"/></g></svg>
<div style="left:521.0px;top:125.5px;width:12px;height:2px;background:#6e6e6e"></div>
<div style="left:326px;top:142px;width:95px;height:24px;background:#d4d4d4"></div>
<span style="left:337.4px;top:148.6px;font-size:12px;line-height:12px;color:#000;letter-spacing:-0.55px;">Common</span>
<span style="left:337.4px;top:172.6px;font-size:12px;line-height:12px;color:#000;letter-spacing:-0.43px;">Text</span>
<span style="left:337.4px;top:196.6px;font-size:12px;line-height:12px;color:#000;letter-spacing:-0.21px;">Buttons</span>
<span style="left:337.4px;top:220.6px;font-size:12px;line-height:12px;color:#000;letter-spacing:-0.18px;">Widgets</span>
<span style="left:337.4px;top:244.6px;font-size:12px;line-height:12px;color:#000;letter-spacing:-0.55px;">Layouts</span>
<span style="left:337.4px;top:268.6px;font-size:12px;line-height:12px;color:#000;letter-spacing:-0.29px;">Containers</span>
<span style="left:337.4px;top:292.6px;font-size:12px;line-height:12px;color:#000;letter-spacing:-0.45px;">Helpers</span>
<span style="left:337.4px;top:316.6px;font-size:12px;line-height:12px;color:#000;letter-spacing:-0.22px;">Google</span>
<span style="left:337.4px;top:340.6px;font-size:12px;line-height:12px;color:#000;letter-spacing:-0.82px;">Legacy</span>
<div style="left:422px;top:142px;width:118px;height:20px;background:#d0d0d0"></div>
<span style="left:451.5px;top:146.8px;font-size:12px;line-height:12px;color:#000;letter-spacing:-0.16px;">TextView</span>
<span style="left:451.5px;top:166.8px;font-size:12px;line-height:12px;color:#000;letter-spacing:0.07px;">Button</span>
<span style="left:451.5px;top:186.8px;font-size:12px;line-height:12px;color:#000;letter-spacing:-0.18px;">ImageView</span>
<span style="left:451.5px;top:206.8px;font-size:12px;line-height:12px;color:#000;letter-spacing:-0.33px;">RecyclerView</span>
<span style="left:451.5px;top:226.8px;font-size:12px;line-height:12px;color:#000;letter-spacing:-0.24px;">FragmentC...</span>
<span style="left:451.5px;top:246.8px;font-size:12px;line-height:12px;color:#000;letter-spacing:-0.23px;">ScrollView</span>
<span style="left:451.5px;top:266.8px;font-size:12px;line-height:12px;color:#000;letter-spacing:-0.21px;">Switch</span>
<span style="left:433px;top:147.3px;font-size:11.5px;line-height:11.5px;color:#a8b0b6;letter-spacing:-0.29px;">Ab</span>
<svg style="left:433.2px;top:167.3px" width="13.7" height="9.3" viewBox="0 0 13.7 9.3" ><rect width="13.7" height="9.3" rx="1.6" fill="#9aa7b0"/></svg>
<svg style="left:433px;top:187px" width="14" height="11" viewBox="0 0 14 11" ><rect width="14" height="11" rx="1" fill="#9aa7b0"/><path d="M1.5 9.2 L5 4.8 L7.5 7.4 L9.6 5.6 L12.5 9.2 Z" fill="#fcfcfc"/></svg>
<svg style="left:433px;top:207px" width="14" height="11" viewBox="0 0 14 11" ><path d="M0 1.5 H2 M0 5.5 H2 M0 9.5 H2" stroke="#9aa7b0" stroke-width="1.6"/><path d="M4 1.5 H14 M4 5.5 H14 M4 9.5 H14" stroke="#9aa7b0" stroke-width="1.6"/></svg>
<svg style="left:433px;top:227px" width="14" height="11" viewBox="0 0 14 11" ><rect x="0.8" y="0.8" width="12.4" height="9.4" fill="none" stroke="#9aa7b0" stroke-width="1.6"/><rect x="4" y="3.5" width="6" height="4" fill="#9aa7b0"/></svg>
<svg style="left:433px;top:247px" width="14" height="11" viewBox="0 0 14 11" ><rect width="14" height="11" rx="1" fill="#9aa7b0"/><rect x="9.5" y="1.5" width="2.6" height="8" fill="#fcfcfc"/></svg>
<svg style="left:433px;top:268.7px" width="14" height="8" viewBox="0 0 14 8" ><rect x="0" y="2.4" width="9" height="3.2" rx="1.6" fill="#c3cad0"/><circle cx="10" cy="4" r="4" fill="#9aa7b0"/></svg>
<span style="left:331.5px;top:547.6px;font-size:12px;line-height:12px;color:#000;letter-spacing:-0.31px;">Component Tree</span>
<svg style="left:493px;top:545px" width="16" height="16" viewBox="0 0 16 16" ><g transform="translate(8 8) scale(1.0)"><circle r="3.45" fill="none" stroke="#6e6e6e" stroke-width="2.7"/><circle r="5.05" fill="none" stroke="#6e6e6e" stroke-width="2.3" stroke-dasharray="2.9 2.388" transform="rotate(-16.5)"/></g></svg>
<div style="left:521.0px;top:552px;width:12px;height:2px;background:#6e6e6e"></div>
<svg style="left:333px;top:570.5px" width="14" height="14" viewBox="0 0 14 14" ><path d="M2.5 2.5 H5 Q7 2.5 7 5 V9 Q7 11.5 9.5 11.5 H11.5" fill="none" stroke="#9c9c9c" stroke-width="1.4"/><circle cx="2.3" cy="2.5" r="1.9" fill="#9c9c9c"/><circle cx="11.7" cy="11.5" r="1.9" fill="#9c9c9c"/></svg>
<span style="left:352.6px;top:572.6px;font-size:12px;line-height:12px;color:#000;letter-spacing:-0.03px;">ConstraintLayout</span>
<span style="left:351.5px;top:592.6px;font-size:11.5px;line-height:11.5px;color:#a8b0b6;letter-spacing:-0.29px;">Ab</span>
<span style="left:370.5px;top:592.1px;font-size:12px;line-height:12px;color:#000;letter-spacing:-0.16px;">TextView</span>
<span style="left:425.8px;top:592.1px;font-size:12px;line-height:12px;color:#999;letter-spacing:-0.13px;">&quot;Hello World!&quot;</span>
<span style="left:552.3px;top:121.6px;font-size:12px;line-height:12px;color:#000;letter-spacing:0.08px;">activity_main.xml</span>
<svg style="left:649.5px;top:126.6px" width="7.6" height="4.8" viewBox="0 0 7.6 4.8" ><path d="M0.5 0.5 L3.8 3.8 L7.1 0.5" fill="none" stroke="#8a8a8a" stroke-width="1.2"/></svg>
<div style="left:664px;top:117px;width:1px;height:20px;background:#d9d9d9"></div>
<div style="left:693px;top:117px;width:1px;height:20px;background:#d9d9d9"></div>
<div style="left:722px;top:117px;width:1px;height:20px;background:#d9d9d9"></div>
<div style="left:751px;top:117px;width:1px;height:20px;background:#d9d9d9"></div>
<div style="left:989px;top:117px;width:1px;height:20px;background:#d9d9d9"></div>
<svg style="left:671.8px;top:119.3px" width="15.2" height="15" viewBox="0 0 15.2 15" ><path d="M7.6 0 L15.2 5.3 L7.6 10.6 L0 5.3 Z" fill="#3592dc"/><path d="M0.8 8.4 L7.6 13.3 L14.4 8.4" fill="none" stroke="#3592dc" stroke-width="1.9"/></svg>
<svg style="left:684.45px;top:134.0px" width="5.5" height="3" viewBox="0 0 5.5 3" ><path d="M0 0 H5.5 L2.75 3 Z" fill="#222"/></svg>
<svg style="left:700px;top:118.8px" width="16" height="16" viewBox="0 0 16 16" ><circle cx="8" cy="8" r="7.5" fill="none" stroke="#5a5a5a" stroke-width="1" stroke-dasharray="9.5 2.3" transform="rotate(-20 8 8)"/><rect x="4.6" y="1.6" width="6.8" height="12.8" rx="0.8" fill="#f2f2f2" stroke="#5a5a5a" stroke-width="1" transform="rotate(-45 8 8)"/></svg>
<svg style="left:715.25px;top:134.0px" width="5.5" height="3" viewBox="0 0 5.5 3" ><path d="M0 0 H5.5 L2.75 3 Z" fill="#222"/></svg>
<svg style="left:730.3px;top:120.3px" width="13" height="13" viewBox="0 0 13 13" ><circle cx="6.5" cy="6.5" r="5.8" fill="#e4e6e8" stroke="#c4c8cc" stroke-width="1.2"/><circle cx="5.3" cy="5.3" r="4.1" fill="#9aa2a9"/></svg>
<svg style="left:743.75px;top:134.0px" width="5.5" height="3" viewBox="0 0 5.5 3" ><path d="M0 0 H5.5 L2.75 3 Z" fill="#222"/></svg>
<svg style="left:765.8px;top:120.9px" width="8.2" height="12" viewBox="0 0 8.2 12" ><rect x="0.8" y="0.8" width="6.6" height="10.4" rx="1" fill="none" stroke="#5e5e5e" stroke-width="1.6"/><path d="M1 9.8 H7.2" stroke="#5e5e5e" stroke-width="1.8"/></svg>
<span style="left:780.8px;top:121.6px;font-size:12px;line-height:12px;color:#000;letter-spacing:-0.50px;">Pixel</span>
<svg style="left:809.2px;top:126.6px" width="7.6" height="4.8" viewBox="0 0 7.6 4.8" ><path d="M0.5 0.5 L3.8 3.8 L7.1 0.5" fill="none" stroke="#8a8a8a" stroke-width="1.2"/></svg>
<svg style="left:829px;top:122.5px" width="12" height="7.4399999999999995" viewBox="0 0 12 7.4399999999999995" ><path d="M0 7.4399999999999995 A6.0 5.8031999999999995 0 0 1 12 7.4399999999999995 Z" fill="#3ddc84"/><path d="M2.4000000000000004 0.3 L3.84 2.6039999999999996 M9.600000000000001 0.3 L8.16 2.6039999999999996" stroke="#3ddc84" stroke-width="1" stroke-linecap="round"/><circle cx="3.5999999999999996" cy="5.0592" r="0.54" fill="#fff"/><circle cx="8.399999999999999" cy="5.0592" r="0.54" fill="#fff"/></svg>
<span style="left:845.4px;top:121.6px;font-size:12px;line-height:12px;color:#000;letter-spacing:-1.18px;">33</span>
<svg style="left:861.2px;top:126.6px" width="7.6" height="4.8" viewBox="0 0 7.6 4.8" ><path d="M0.5 0.5 L3.8 3.8 L7.1 0.5" fill="none" stroke="#8a8a8a" stroke-width="1.2"/></svg>
<svg style="left:882px;top:120.5px" width="14" height="14" viewBox="0 0 14 14" ><circle cx="7" cy="7" r="6.2" fill="none" stroke="#6e6e6e" stroke-width="1.2"/><circle cx="7" cy="7" r="3.8" fill="none" stroke="#6e6e6e" stroke-width="1"/><path d="M7 3.2 A3.8 3.8 0 0 0 7 10.8 Z" fill="#6e6e6e"/></svg>
<span style="left:899.4px;top:121.6px;font-size:12px;line-height:12px;color:#000;letter-spacing:0.07px;">AndroidApp1</span>
<svg style="left:974.2px;top:126.6px" width="7.6" height="4.8" viewBox="0 0 7.6 4.8" ><path d="M0.5 0.5 L3.8 3.8 L7.1 0.5" fill="none" stroke="#8a8a8a" stroke-width="1.2"/></svg>
<svg style="left:1001.4px;top:120.5px" width="14" height="14" viewBox="0 0 14 14" ><circle cx="7" cy="7" r="6.7" fill="#6e6e6e"/><path d="M3 2.5 Q5 4 4 5.5 Q2.5 6.5 3.5 8 Q5.5 8.5 5.5 10.5 Q6 12.5 7.5 12 Q9 10 8 8.5 Q6 7 7 5 Q9.5 4.5 9 2" fill="none" stroke="#f2f2f2" stroke-width="1.1"/><path d="M10.5 6.5 Q11 8.5 12.8 8.5" fill="none" stroke="#f2f2f2" stroke-width="1.1"/></svg>
<span style="left:1018.6px;top:121.6px;font-size:12px;line-height:12px;color:#000;letter-spacing:-0.08px;">Default (en-us)</span>
<svg style="left:1101.2px;top:126.6px" width="7.6" height="4.8" viewBox="0 0 7.6 4.8" ><path d="M0.5 0.5 L3.8 3.8 L7.1 0.5" fill="none" stroke="#8a8a8a" stroke-width="1.2"/></svg>
<svg style="left:1521px;top:120px" width="14" height="14" viewBox="0 0 14 14" ><circle cx="7" cy="7" r="7" fill="#9c9c9c"/><rect x="6.1" y="3" width="1.8" height="5" fill="#f2f2f2"/><rect x="6.1" y="9.3" width="1.8" height="1.8" fill="#f2f2f2"/></svg>
<svg style="left:547px;top:150.5px" width="14" height="11" viewBox="0 0 14 11" ><path d="M0.3 5.5 Q7 -3.5 13.7 5.5 Q7 14.5 0.3 5.5 Z" fill="#6e6e6e"/><circle cx="7" cy="5.5" r="3" fill="#f2f2f2"/><circle cx="7" cy="5.5" r="1.6" fill="#6e6e6e"/></svg>
<svg style="left:559.5px;top:162.5px" width="5" height="3" viewBox="0 0 5 3" ><path d="M0 0 H5 L2.5 3 Z" fill="#333"/></svg>
<svg style="left:571.5px;top:149px" width="14" height="15" viewBox="0 0 14 15" ><path d="M2.2 3.5 V8 A4.8 4.8 0 0 0 11.8 8 V7" fill="none" stroke="#6e6e6e" stroke-width="2.6"/><path d="M0.5 1 L13.5 14.5" stroke="#6e6e6e" stroke-width="1.3"/><rect x="10.4" y="1" width="2.8" height="2.4" fill="#389fd6"/><rect x="10.4" y="4.4" width="2.8" height="1.6" fill="#389fd6"/></svg>
<span style="left:601.5px;top:150.3px;font-size:12px;line-height:12px;color:#000;letter-spacing:-0.41px;">0dp</span>
<svg style="left:593.5px;top:158px" width="36" height="6" viewBox="0 0 36 6" ><path d="M0.5 0 V5.5 H35.5 V0" fill="none" stroke="#333" stroke-width="1"/></svg>
<div style="left:634px;top:146px;width:1px;height:20px;background:#d9d9d9"></div>
<svg style="left:643px;top:149px" width="17" height="15" viewBox="0 0 17 15" ><path d="M2.5 12 Q6 12 6.5 7.5 Q7 3 10.5 3" fill="none" stroke="#6e6e6e" stroke-width="1.5"/><circle cx="2.3" cy="12" r="2" fill="#6e6e6e"/><circle cx="11" cy="2.8" r="2" fill="#6e6e6e"/><path d="M10.5 9.5 L15.5 14.5 M15.5 9.5 L10.5 14.5" stroke="#db5860" stroke-width="1.4"/></svg>
<svg style="left:670px;top:149px" width="15" height="15" viewBox="0 0 15 15" ><path d="M1 14 L8.5 6.5" stroke="#6e6e6e" stroke-width="2.4" stroke-linecap="round"/><path d="M9 1 V3.5 M12.8 2.5 L11.2 4.2 M14 6.5 H11.8 M12.8 10 L11.4 8.6 M5.2 2.4 L6.6 3.8" stroke="#6e6e6e" stroke-width="1"/></svg>
<div style="left:693px;top:146px;width:1px;height:20px;background:#d9d9d9"></div>
<svg style="left:704px;top:149.3px" width="9" height="13.4" viewBox="0 0 9 13.4" ><path d="M0 0.8 H9 M0 12.2 H9" stroke="#333" stroke-width="1.6"/><path d="M4.5 2.5 V10.5" stroke="#333" stroke-width="1.3" stroke-dasharray="1.6 1.2"/></svg>
<svg style="left:713.5px;top:162.5px" width="5" height="3" viewBox="0 0 5 3" ><path d="M0 0 H5 L2.5 3 Z" fill="#333"/></svg>
<svg style="left:1534px;top:150px" width="12" height="12" viewBox="0 0 12 12" ><circle cx="6" cy="6" r="6" fill="#3c9bdb"/><text x="6" y="9.6" font-size="9.5" font-weight="bold" text-anchor="middle" fill="#fff" font-family='"Liberation Sans",sans-serif'>?</text></svg>
<div style="left:1545px;top:171px;width:10px;height:757px;background:#dcdcdc"></div>
<div style="left:623px;top:221px;width:401px;height:714px;background:#fff;box-shadow:0 0 3px rgba(0,0,0,0.30)"></div>
<span style="left:786.6px;top:571.8px;font-size:14px;line-height:14px;color:#747474;letter-spacing:-0.23px;">Hello World!</span>
<div style="left:1073px;top:221.8px;width:400.3px;height:713.1px;background:#245b6e;box-shadow:0 0 0 1px #c4e2ea,0 0 3px 1px rgba(0,0,0,0.22)"></div>
<div style="left:1236px;top:568.9px;width:76.1px;height:20.1px;border:1.2px solid #8fd6ea;box-sizing:border-box;background:rgba(143,214,234,0.2)"></div>
<span style="left:1237px;top:573.1px;font-size:12.8px;line-height:12.8px;color:#8bcfe3;letter-spacing:-0.31px;">Hello World!</span>
<svg style="left:1006.8px;top:199px" width="9" height="14" viewBox="0 0 9 14" ><path d="M2.6 0.2 V3.2 H6.4 V0.2 A4.2 4.2 0 0 1 5.8 8 V13 A1.3 1.3 0 0 1 3.2 13 V8 A4.2 4.2 0 0 1 2.6 0.2 Z" fill="#5a5a5a"/></svg>
<svg style="left:1455.5px;top:199px" width="9" height="14" viewBox="0 0 9 14" ><path d="M2.6 0.2 V3.2 H6.4 V0.2 A4.2 4.2 0 0 1 5.8 8 V13 A1.3 1.3 0 0 1 3.2 13 V8 A4.2 4.2 0 0 1 2.6 0.2 Z" fill="#5a5a5a"/></svg>
<svg style="left:1028px;top:939px" width="17" height="17" viewBox="0 0 17 17" ><path d="M0.2 16.9 L16.8 0.1 M8.4 16.9 L16.8 8" stroke="#505050" stroke-width="1"/></svg>
<div style="left:1510.3px;top:793.1px;width:27.2px;height:29.6px;background:#fff;border:1px solid #d4d4d4;border-radius:3px;box-sizing:border-box"></div>
<div style="left:1510.3px;top:827px;width:27.2px;height:108px;background:#fff;border:1px solid #d4d4d4;border-radius:3px;box-sizing:border-box"></div>
<svg style="left:1517px;top:801px" width="14" height="14" viewBox="0 0 14 14" ><path d="M2.2 7.5 L4 6.5 L5 8.4 V2.3 A0.9 0.9 0 0 1 6.8 2.3 V1.4 A0.9 0.9 0 0 1 8.6 1.4 V2 A0.9 0.9 0 0 1 10.4 2 V3 A0.9 0.9 0 0 1 12.2 3 V9.5 Q12.2 13.5 8.5 13.5 Q5.5 13.5 4.2 11 Z" fill="#5a5a5a"/></svg>
<svg style="left:1518.9px;top:836.7px" width="10.2" height="10.2" viewBox="0 0 10.2 10.2" ><path d="M5.1 0 V10.2 M0 5.1 H10.2" stroke="#5a5a5a" stroke-width="1.8"/></svg>
<div style="left:1519px;top:867px;width:10px;height:2px;background:#5a5a5a"></div>
<span style="left:1517.5px;top:889.4px;font-size:10.5px;line-height:10.5px;color:#4a4a4a;letter-spacing:-0.90px;font-weight:bold;">1:1</span>
<svg style="left:1517.2px;top:914px" width="13.8" height="11.6" viewBox="0 0 13.8 11.6" ><rect x="0.8" y="0.8" width="12.2" height="10" fill="none" stroke="#5a5a5a" stroke-width="1.6"/><path d="M3.4 5.4 V3.4 H5.6 M8.2 8.2 H10.4 V6.2" fill="none" stroke="#5a5a5a" stroke-width="1.1"/></svg>
<svg style="left:1801.8px;top:70px" width="13.4" height="9.6" viewBox="0.3 1.9 15.4 9.3" preserveAspectRatio="none"><path d="M0.5 11 Q0.5 4.5 5.5 4 Q9 3.8 10.5 5.2 Q11.5 2 14 2.2 Q15.8 2.6 15.2 4.6 Q14.6 5.6 13.6 5 Q13.9 3.8 13.2 3.8 Q12.3 4.2 12.3 6.5 V11 H9.8 V8.6 H7.2 V11 H4.6 V8.4 Q3.2 8.6 3 11 Z" fill="#6e6e6e"/></svg>
<div style="left:1806.8px;top:87px;width:0;height:0;transform:rotate(90deg);transform-origin:0 0"><span style="left:0;top:-6px;font-size:11.5px;line-height:12px;color:#1a1a1a;white-space:pre;letter-spacing:-0.21px">Gradle</span></div>
<svg style="left:1803px;top:142px" width="11" height="12.8" viewBox="0 0 11 12.8" ><path d="M8.1 3.4 V0.8 H0.8 V10.6 H3.4" fill="none" stroke="#636363" stroke-width="1.6"/><rect x="0.8" y="8.8" width="2.4" height="2.4" fill="#636363"/><rect x="4.9" y="4.8" width="5.3" height="7.2" rx="0.9" fill="#f2f2f2" stroke="#636363" stroke-width="1.4"/><rect x="4.9" y="10.2" width="5.3" height="1.9" fill="#636363"/></svg>
<div style="left:1806.8px;top:159.8px;width:0;height:0;transform:rotate(90deg);transform-origin:0 0"><span style="left:0;top:-6px;font-size:11.5px;line-height:12px;color:#1a1a1a;white-space:pre;letter-spacing:-0.15px">Layout Validation</span></div>
<svg style="left:1803px;top:274.5px" width="11" height="12.8" viewBox="0 0 11 12.8" ><path d="M8.1 3.4 V0.8 H0.8 V10.6 H3.4" fill="none" stroke="#636363" stroke-width="1.6"/><rect x="0.8" y="8.8" width="2.4" height="2.4" fill="#636363"/><rect x="4.9" y="4.8" width="5.3" height="7.2" rx="0.9" fill="#f2f2f2" stroke="#636363" stroke-width="1.4"/><rect x="4.9" y="10.2" width="5.3" height="1.9" fill="#636363"/></svg>
<div style="left:1806.8px;top:292px;width:0;height:0;transform:rotate(90deg);transform-origin:0 0"><span style="left:0;top:-6px;font-size:11.5px;line-height:12px;color:#1a1a1a;white-space:pre;letter-spacing:-0.27px">Device Manager</span></div>
<svg style="left:1803px;top:766px" width="10" height="13" viewBox="0 0 10 13" ><rect x="0.9" y="0.9" width="8.2" height="11.2" rx="1.2" fill="none" stroke="#6e6e6e" stroke-width="1.6"/><path d="M1 9.8 H9" stroke="#6e6e6e" stroke-width="1.4"/></svg>
<div style="left:1806.8px;top:783.7px;width:0;height:0;transform:rotate(90deg);transform-origin:0 0"><span style="left:0;top:-6px;font-size:11.5px;line-height:12px;color:#1a1a1a;white-space:pre;letter-spacing:-0.43px">Device File Explorer</span></div>
<svg style="left:1803px;top:906.5px" width="11" height="12.8" viewBox="0 0 11 12.8" ><path d="M8.1 3.4 V0.8 H0.8 V10.6 H3.4" fill="none" stroke="#636363" stroke-width="1.6"/><rect x="0.8" y="8.8" width="2.4" height="2.4" fill="#636363"/><rect x="4.9" y="4.8" width="5.3" height="7.2" rx="0.9" fill="#f2f2f2" stroke="#636363" stroke-width="1.4"/><rect x="4.9" y="10.2" width="5.3" height="1.9" fill="#636363"/><circle cx="9" cy="10.4" r="2.5" fill="#3bc26a"/></svg>
<div style="left:1806.8px;top:924px;width:0;height:0;transform:rotate(90deg);transform-origin:0 0"><span style="left:0;top:-6px;font-size:11.5px;line-height:12px;color:#1a1a1a;white-space:pre;letter-spacing:-0.25px">Emulator</span></div>
<span style="left:1561px;top:121.6px;font-size:12px;line-height:12px;color:#000;letter-spacing:-0.02px;">Attributes</span>
<svg style="left:1724px;top:119px" width="16" height="16" viewBox="0 0 16 16" ><circle cx="6.5" cy="6.5" r="4.6" fill="none" stroke="#6e6e6e" stroke-width="1.8"/><path d="M10 10 L14.3 14.3" stroke="#6e6e6e" stroke-width="2.2" stroke-linecap="round"/></svg>
<svg style="left:1750px;top:118.5px" width="16" height="16" viewBox="0 0 16 16" ><g transform="translate(8 8) scale(1.0)"><circle r="3.45" fill="none" stroke="#6e6e6e" stroke-width="2.7"/><circle r="5.05" fill="none" stroke="#6e6e6e" stroke-width="2.3" stroke-dasharray="2.9 2.388" transform="rotate(-16.5)"/></g></svg>
<div style="left:1778.0px;top:125.5px;width:12px;height:2px;background:#6e6e6e"></div>
<div style="left:1784px;top:166px;width:13px;height:790px;background:#fbfbfb"></div>
<div style="left:1787px;top:166px;width:10px;height:122px;background:#dcdcdc"></div>
<div style="left:1556px;top:142px;width:241px;height:23px;background:#fefefe"></div>
<div style="left:1556px;top:165px;width:241px;height:1px;background:#e0e0e0"></div>
<svg style="left:1560px;top:146.5px" width="14" height="14" viewBox="0 0 14 14" ><path d="M2.5 2.5 H5 Q7 2.5 7 5 V9 Q7 11.5 9.5 11.5 H11.5" fill="none" stroke="#b4b4b4" stroke-width="1.4"/><circle cx="2.3" cy="2.5" r="1.9" fill="#b4b4b4"/><circle cx="11.7" cy="11.5" r="1.9" fill="#b4b4b4"/></svg>
<span style="left:1579.7px;top:149.1px;font-size:12px;line-height:12px;color:#bcbcbc;letter-spacing:-0.03px;">ConstraintLayout</span>
<span style="left:1728px;top:149.1px;font-size:12px;line-height:12px;color:#000;letter-spacing:0.03px;">&lt;unnamed&gt;</span>
<span style="left:1564px;top:177.2px;font-size:12px;line-height:12px;color:#000;letter-spacing:0.13px;">id</span>
<div style="left:1649px;top:173.5px;width:117px;height:17px;background:#fdfdfd;border:1px solid #c4c4c4;box-sizing:border-box"></div>
<div style="left:1556px;top:198px;width:227px;height:24.5px;background:#f2f2f2"></div>
<div style="left:1556px;top:198px;width:227px;height:1px;background:#e4e4e4"></div>
<div style="left:1556px;top:222.5px;width:227px;height:1px;background:#e4e4e4"></div>
<svg style="left:1563.3px;top:207.35px" width="8.4" height="5.2" viewBox="0 0 8.4 5.2" ><path d="M0.5 0.5 L4.2 4.2 L7.9 0.5" fill="none" stroke="#7a7a7a" stroke-width="1.2"/></svg>
<span style="left:1575.5px;top:204.4px;font-size:12px;line-height:12px;color:#000;letter-spacing:-0.04px;font-weight:bold;">Declared Attributes</span>
<svg style="left:1744px;top:203.5px" width="10" height="10" viewBox="0 0 10 10" ><path d="M5 0 V10 M0 5 H10" stroke="#6e6e6e" stroke-width="1.5"/></svg>
<div style="left:1766px;top:208px;width:10px;height:1.5px;background:#6e6e6e"></div>
<div style="left:1556px;top:246.5px;width:227px;height:1px;background:#e4e4e4"></div>
<div style="left:1647px;top:223px;width:1px;height:24px;background:#e4e4e4"></div>
<span style="left:1569.5px;top:228.6px;font-size:12px;line-height:12px;color:#000;letter-spacing:-0.04px;">layout_width</span>
<span style="left:1657px;top:228.6px;font-size:12px;line-height:12px;color:#000;letter-spacing:-0.06px;">match_parent</span>
<div style="left:1743px;top:228px;width:1px;height:14px;background:#d1d1d1"></div>
<svg style="left:1750.5px;top:233.25px" width="8" height="4.5" viewBox="0 0 8 4.5" ><path d="M0 0 H8 L4.0 4.5 Z" fill="#6e6e6e"/></svg>
<div style="left:1772.5px;top:227.5px;width:5px;height:15px;border:1px solid #cfcfcf;border-radius:2.5px;box-sizing:border-box;background:#fff"></div>
<div style="left:1556px;top:270.5px;width:227px;height:1px;background:#e4e4e4"></div>
<div style="left:1647px;top:247px;width:1px;height:24px;background:#e4e4e4"></div>
<span style="left:1569.5px;top:252.6px;font-size:12px;line-height:12px;color:#000;letter-spacing:-0.07px;">layout_height</span>
<span style="left:1657px;top:252.6px;font-size:12px;line-height:12px;color:#000;letter-spacing:-0.06px;">match_parent</span>
<div style="left:1743px;top:252px;width:1px;height:14px;background:#d1d1d1"></div>
<svg style="left:1750.5px;top:257.25px" width="8" height="4.5" viewBox="0 0 8 4.5" ><path d="M0 0 H8 L4.0 4.5 Z" fill="#6e6e6e"/></svg>
<div style="left:1772.5px;top:251.5px;width:5px;height:15px;border:1px solid #cfcfcf;border-radius:2.5px;box-sizing:border-box;background:#fff"></div>
<div style="left:1556px;top:294.5px;width:227px;height:1px;background:#e4e4e4"></div>
<div style="left:1647px;top:271px;width:1px;height:24px;background:#e4e4e4"></div>
<span style="left:1572.5px;top:276.6px;font-size:12px;line-height:12px;color:#000;letter-spacing:-0.21px;">context</span>
<span style="left:1653.5px;top:276.6px;font-size:12px;line-height:12px;color:#000;letter-spacing:0.24px;">.MainActivity</span>
<div style="left:1772.5px;top:275.5px;width:5px;height:15px;border:1px solid #cfcfcf;border-radius:2.5px;box-sizing:border-box;background:#fff"></div>
<svg style="left:1559.5px;top:277.5px" width="9.5" height="9.5" viewBox="0 0 10 10" ><path d="M9.3 1.2 L7.4 3.1 L6.3 2.0 L8.2 0.1 A3 3 0 0 0 4.4 3.9 L0.4 7.9 A1 1 0 0 0 1.9 9.4 L5.9 5.4 A3 3 0 0 0 9.3 1.2 Z" fill="#6e6e6e"/></svg>
<div style="left:1556px;top:298px;width:227px;height:25px;background:#f2f2f2"></div>
<div style="left:1556px;top:298px;width:227px;height:1px;background:#e4e4e4"></div>
<div style="left:1556px;top:323px;width:227px;height:1px;background:#e4e4e4"></div>
<svg style="left:1563.3px;top:307.59999999999997px" width="8.4" height="5.2" viewBox="0 0 8.4 5.2" ><path d="M0.5 0.5 L4.2 4.2 L7.9 0.5" fill="none" stroke="#7a7a7a" stroke-width="1.2"/></svg>
<span style="left:1575.5px;top:304.9px;font-size:12px;line-height:12px;color:#000;letter-spacing:-0.56px;font-weight:bold;">Layout</span>
<div style="left:1649px;top:331.0px;width:117px;height:17.5px;background:#fdfdfd;border:1px solid #c4c4c4;border-radius:2px;box-sizing:border-box"></div>
<div style="left:1743px;top:332.0px;width:1px;height:15.5px;background:#c4c4c4"></div>
<svg style="left:1750.5px;top:337.55px" width="8" height="4.5" viewBox="0 0 8 4.5" ><path d="M0 0 H8 L4.0 4.5 Z" fill="#6e6e6e"/></svg>
<span style="left:1655.4px;top:335.0px;font-size:12px;line-height:12px;color:#000;letter-spacing:-0.07px;">match_parent</span>
<div style="left:1772.5px;top:332.5px;width:5px;height:15px;border:1px solid #cfcfcf;border-radius:2.5px;box-sizing:border-box;background:#fff"></div>
<span style="left:1564px;top:335.2px;font-size:12px;line-height:12px;color:#000;letter-spacing:0.02px;">layout_width</span>
<div style="left:1649px;top:355.0px;width:117px;height:17.5px;background:#fdfdfd;border:1px solid #c4c4c4;border-radius:2px;box-sizing:border-box"></div>
<div style="left:1743px;top:356.0px;width:1px;height:15.5px;background:#c4c4c4"></div>
<svg style="left:1750.5px;top:361.55px" width="8" height="4.5" viewBox="0 0 8 4.5" ><path d="M0 0 H8 L4.0 4.5 Z" fill="#6e6e6e"/></svg>
<span style="left:1655.4px;top:359.0px;font-size:12px;line-height:12px;color:#000;letter-spacing:-0.07px;">match_parent</span>
<div style="left:1772.5px;top:356.5px;width:5px;height:15px;border:1px solid #cfcfcf;border-radius:2.5px;box-sizing:border-box;background:#fff"></div>
<span style="left:1564px;top:359.2px;font-size:12px;line-height:12px;color:#000;letter-spacing:-0.01px;">layout_height</span>
<div style="left:1649px;top:379.0px;width:117px;height:17.5px;background:#fdfdfd;border:1px solid #c4c4c4;border-radius:2px;box-sizing:border-box"></div>
<div style="left:1743px;top:380.0px;width:1px;height:15.5px;background:#c4c4c4"></div>
<svg style="left:1750.5px;top:385.55px" width="8" height="4.5" viewBox="0 0 8 4.5" ><path d="M0 0 H8 L4.0 4.5 Z" fill="#6e6e6e"/></svg>
<span style="left:1564px;top:383.0px;font-size:12px;line-height:12px;color:#000;letter-spacing:0.02px;">visibility</span>
<div style="left:1649px;top:403.0px;width:117px;height:17.5px;background:#fdfdfd;border:1px solid #c4c4c4;border-radius:2px;box-sizing:border-box"></div>
<div style="left:1743px;top:404.0px;width:1px;height:15.5px;background:#c4c4c4"></div>
<svg style="left:1750.5px;top:409.55px" width="8" height="4.5" viewBox="0 0 8 4.5" ><path d="M0 0 H8 L4.0 4.5 Z" fill="#6e6e6e"/></svg>
<span style="left:1576px;top:406.8px;font-size:12px;line-height:12px;color:#000;letter-spacing:-0.03px;">visibility</span>
<svg style="left:1563px;top:407.5px" width="9.5" height="9.5" viewBox="0 0 10 10" ><path d="M9.3 1.2 L7.4 3.1 L6.3 2.0 L8.2 0.1 A3 3 0 0 0 4.4 3.9 L0.4 7.9 A1 1 0 0 0 1.9 9.4 L5.9 5.4 A3 3 0 0 0 9.3 1.2 Z" fill="#6e6e6e"/></svg>
<div style="left:1556px;top:427.5px;width:227px;height:24.5px;background:#f2f2f2"></div>
<div style="left:1556px;top:427.5px;width:227px;height:1px;background:#e4e4e4"></div>
<div style="left:1556px;top:452.0px;width:227px;height:1px;background:#e4e4e4"></div>
<svg style="left:1563.3px;top:436.84999999999997px" width="8.4" height="5.2" viewBox="0 0 8.4 5.2" ><path d="M0.5 0.5 L4.2 4.2 L7.9 0.5" fill="none" stroke="#7a7a7a" stroke-width="1.2"/></svg>
<span style="left:1575.5px;top:433.9px;font-size:12px;line-height:12px;color:#000;letter-spacing:-0.26px;font-weight:bold;">Transforms</span>
<div style="left:1611px;top:497px;width:117px;height:93px;border:1px solid #333;box-sizing:border-box"></div>
<div style="left:1613px;top:499px;width:113px;height:89px;border:1px solid #333;box-sizing:border-box"></div>
<span style="left:1629.5px;top:520.3px;font-size:39px;line-height:39px;letter-spacing:-1.4px;color:#fcfcfc;-webkit-text-stroke:0.9px #333;white-space:pre">View</span>
<span style="left:1566px;top:641.8px;font-size:12px;line-height:12px;color:#000;letter-spacing:0.04px;">Rotation</span>
<span style="left:1586px;top:661.5px;font-size:12px;line-height:12px;color:#000;">x</span>
<div style="left:1602px;top:664.5px;width:141px;height:3px;background:#c9c9c9;border-radius:1.5px"></div>
<svg style="left:1665px;top:657.7px" width="16" height="18" viewBox="0 0 16 18" ><path d="M0.5 1.5 Q0.5 0.5 1.5 0.5 H14.5 Q15.5 0.5 15.5 1.5 V10 L8 17 L0.5 10 Z" fill="#fdfdfd" stroke="#b9b9b9" stroke-width="1"/></svg>
<span style="left:1753px;top:661.5px;font-size:12px;line-height:12px;color:#000;">0</span>
<span style="left:1586px;top:685.5px;font-size:12px;line-height:12px;color:#000;">y</span>
<div style="left:1602px;top:688.5px;width:141px;height:3px;background:#c9c9c9;border-radius:1.5px"></div>
<svg style="left:1665px;top:681.7px" width="16" height="18" viewBox="0 0 16 18" ><path d="M0.5 1.5 Q0.5 0.5 1.5 0.5 H14.5 Q15.5 0.5 15.5 1.5 V10 L8 17 L0.5 10 Z" fill="#fdfdfd" stroke="#b9b9b9" stroke-width="1"/></svg>
<span style="left:1753px;top:685.5px;font-size:12px;line-height:12px;color:#000;">0</span>
<span style="left:1586px;top:709.5px;font-size:12px;line-height:12px;color:#000;">z</span>
<div style="left:1602px;top:712.5px;width:141px;height:3px;background:#c9c9c9;border-radius:1.5px"></div>
<svg style="left:1665px;top:705.7px" width="16" height="18" viewBox="0 0 16 18" ><path d="M0.5 1.5 Q0.5 0.5 1.5 0.5 H14.5 Q15.5 0.5 15.5 1.5 V10 L8 17 L0.5 10 Z" fill="#fdfdfd" stroke="#b9b9b9" stroke-width="1"/></svg>
<span style="left:1753px;top:709.5px;font-size:12px;line-height:12px;color:#000;">0</span>
<div style="left:1649px;top:740.2px;width:117px;height:17.5px;background:#fdfdfd;border:1px solid #c4c4c4;box-sizing:border-box"></div>
<div style="left:1772.5px;top:741.5px;width:5px;height:15px;border:1px solid #cfcfcf;border-radius:2.5px;box-sizing:border-box;background:#fff"></div>
<span style="left:1564.4px;top:743.6px;font-size:12px;line-height:12px;color:#000;letter-spacing:0.12px;">rotation</span>
<div style="left:1649px;top:764.2px;width:117px;height:17.5px;background:#fdfdfd;border:1px solid #c4c4c4;box-sizing:border-box"></div>
<div style="left:1772.5px;top:765.5px;width:5px;height:15px;border:1px solid #cfcfcf;border-radius:2.5px;box-sizing:border-box;background:#fff"></div>
<span style="left:1564.4px;top:767.6px;font-size:12px;line-height:12px;color:#000;letter-spacing:-0.08px;">rotationX</span>
<div style="left:1649px;top:788.2px;width:117px;height:17.5px;background:#fdfdfd;border:1px solid #c4c4c4;box-sizing:border-box"></div>
<div style="left:1772.5px;top:789.5px;width:5px;height:15px;border:1px solid #cfcfcf;border-radius:2.5px;box-sizing:border-box;background:#fff"></div>
<span style="left:1564.4px;top:791.6px;font-size:12px;line-height:12px;color:#000;letter-spacing:-0.16px;">rotationY</span>
<div style="left:1649px;top:812.2px;width:117px;height:17.5px;background:#fdfdfd;border:1px solid #c4c4c4;box-sizing:border-box"></div>
<div style="left:1772.5px;top:813.5px;width:5px;height:15px;border:1px solid #cfcfcf;border-radius:2.5px;box-sizing:border-box;background:#fff"></div>
<span style="left:1564.4px;top:815.6px;font-size:12px;line-height:12px;color:#000;letter-spacing:-0.91px;">scaleX</span>
<div style="left:1649px;top:836.2px;width:117px;height:17.5px;background:#fdfdfd;border:1px solid #c4c4c4;box-sizing:border-box"></div>
<div style="left:1772.5px;top:837.5px;width:5px;height:15px;border:1px solid #cfcfcf;border-radius:2.5px;box-sizing:border-box;background:#fff"></div>
<span style="left:1564.4px;top:839.6px;font-size:12px;line-height:12px;color:#000;letter-spacing:-1.07px;">scaleY</span>
<div style="left:1649px;top:860.2px;width:117px;height:17.5px;background:#fdfdfd;border:1px solid #c4c4c4;box-sizing:border-box"></div>
<div style="left:1772.5px;top:861.5px;width:5px;height:15px;border:1px solid #cfcfcf;border-radius:2.5px;box-sizing:border-box;background:#fff"></div>
<span style="left:1564.4px;top:863.6px;font-size:12px;line-height:12px;color:#000;letter-spacing:-0.15px;">translationX</span>
<div style="left:1649px;top:884.2px;width:117px;height:17.5px;background:#fdfdfd;border:1px solid #c4c4c4;box-sizing:border-box"></div>
<div style="left:1772.5px;top:885.5px;width:5px;height:15px;border:1px solid #cfcfcf;border-radius:2.5px;box-sizing:border-box;background:#fff"></div>
<span style="left:1564.4px;top:887.6px;font-size:12px;line-height:12px;color:#000;letter-spacing:-0.23px;">translationY</span>
<div style="left:1649px;top:908.2px;width:117px;height:17.5px;background:#fdfdfd;border:1px solid #c4c4c4;box-sizing:border-box"></div>
<div style="left:1772.5px;top:909.5px;width:5px;height:15px;border:1px solid #cfcfcf;border-radius:2.5px;box-sizing:border-box;background:#fff"></div>
<span style="left:1564.4px;top:911.6px;font-size:12px;line-height:12px;color:#000;letter-spacing:-0.13px;">translationZ</span>
<div style="left:1649px;top:932.2px;width:117px;height:17.5px;background:#fdfdfd;border:1px solid #c4c4c4;box-sizing:border-box"></div>
<div style="left:1772.5px;top:933.5px;width:5px;height:15px;border:1px solid #cfcfcf;border-radius:2.5px;box-sizing:border-box;background:#fff"></div>
<span style="left:1564.4px;top:935.6px;font-size:12px;line-height:12px;color:#000;letter-spacing:-0.24px;">alpha</span>
<div style="left:326px;top:956px;width:1471px;height:23px;background:#f0f0f0"></div>
<div style="left:326px;top:956px;width:1471px;height:1px;background:#f8f8f8"></div>
<svg style="left:36px;top:985.5px" width="9" height="12.5" viewBox="0 0 9 12.5" ><circle cx="2.2" cy="2.2" r="2" fill="#6e6e6e"/><circle cx="7" cy="3.2" r="1.9" fill="#6e6e6e"/><path d="M2.2 2 V12 M7 3 Q7 7.4 2.2 8.4" fill="none" stroke="#6e6e6e" stroke-width="1.8"/></svg>
<span style="left:51px;top:985.8px;font-size:12px;line-height:12px;color:#000;letter-spacing:-0.08px;">Version Control</span>
<svg style="left:155px;top:986px" width="13" height="12" viewBox="0 0 13 12" ><path d="M0.5 0.5 L8.5 5 L0.5 9.5 Z" fill="#6e6e6e"/><circle cx="9.5" cy="9" r="2.5" fill="#1fb82e"/></svg>
<span style="left:170px;top:985.8px;font-size:12px;line-height:12px;color:#000;letter-spacing:-0.41px;">Run</span>
<svg style="left:212px;top:987px" width="11" height="9" viewBox="0 0 11 9" ><path d="M0 1 H2 M0 4.5 H2 M0 8 H2" stroke="#6e6e6e" stroke-width="1.5"/><path d="M3.5 1 H11 M3.5 4.5 H11 M3.5 8 H11" stroke="#6e6e6e" stroke-width="1.5"/></svg>
<span style="left:227px;top:985.8px;font-size:12px;line-height:12px;color:#000;letter-spacing:-0.61px;">TODO</span>
<svg style="left:280px;top:986px" width="11" height="11" viewBox="0 0 11 11" ><circle cx="5.5" cy="5.5" r="5.5" fill="#6e6e6e"/><rect x="4.7" y="2.2" width="1.6" height="4.2" fill="#f2f2f2"/><rect x="4.7" y="7.4" width="1.6" height="1.6" fill="#f2f2f2"/></svg>
<span style="left:296px;top:985.8px;font-size:12px;line-height:12px;color:#000;letter-spacing:-0.46px;">Problems</span>
<svg style="left:365px;top:986px" width="11" height="11" viewBox="0 0 11 11" ><rect width="11" height="11" rx="1" fill="#6e6e6e"/><path d="M2 2.8 L4.8 5.3 L2 7.8 M5.5 8.3 H9" fill="none" stroke="#f2f2f2" stroke-width="1.1"/></svg>
<span style="left:381.3px;top:985.8px;font-size:12px;line-height:12px;color:#000;letter-spacing:-0.23px;">Terminal</span>
<svg style="left:446.5px;top:987px" width="12" height="9" viewBox="0 0 12 9" ><path d="M0 1 H12 M0 4.5 H8 M0 8 H10" stroke="#6e6e6e" stroke-width="1.6"/></svg>
<span style="left:463.5px;top:985.8px;font-size:12px;line-height:12px;color:#000;letter-spacing:-0.49px;">Logcat</span>
<svg style="left:519.5px;top:985px" width="12" height="13" viewBox="0 0 12 13" ><path d="M3 3.5 Q3 0.5 6 0.5 Q9 0.5 9 3.5 V5 H3 Z" fill="#6e6e6e"/><rect x="1.5" y="5.2" width="9" height="4" rx="1" fill="#6e6e6e"/><path d="M0 7 H12" stroke="#6e6e6e" stroke-width="1.2"/><path d="M3 9.5 H9 L10 12.5 H2 Z" fill="#6e6e6e"/></svg>
<span style="left:536.5px;top:985.8px;font-size:12px;line-height:12px;color:#000;letter-spacing:-0.14px;">App Inspection</span>
<svg style="left:635px;top:985.5px" width="13" height="12" viewBox="0 0 13 12" ><path d="M0.8 2.8 L3.6 0.4 L7.6 1.9 L5.4 4.2 L12.4 10 L10.6 11.9 L4 5.2 L2.8 6.1 Z" fill="#6e6e6e"/></svg>
<span style="left:652.6px;top:985.8px;font-size:12px;line-height:12px;color:#000;letter-spacing:-0.32px;">Build</span>
<svg style="left:697px;top:987px" width="13" height="10" viewBox="0 0 13 10" ><path d="M1.4 9.5 A5.3 5.3 0 0 1 11.6 9.5" fill="none" stroke="#6e6e6e" stroke-width="2.2"/><path d="M6 9.5 L9.4 3.2 L8 9.8 Z" fill="#6e6e6e" stroke="#6e6e6e" stroke-width="0.7"/></svg>
<span style="left:714px;top:985.8px;font-size:12px;line-height:12px;color:#000;letter-spacing:-0.13px;">Profiler</span>
<svg style="left:1593px;top:985px" width="13" height="13" viewBox="0 0 13 13" ><circle cx="6.5" cy="6.5" r="6" fill="#59a869"/><path d="M4 3.5 Q7 3 7 6.5 Q7 10 10 9.5" fill="none" stroke="#f2f2f2" stroke-width="1.3"/></svg>
<span style="left:1610.3px;top:985.8px;font-size:12px;line-height:12px;color:#000;letter-spacing:-0.53px;">Event Log</span>
<svg style="left:1683px;top:986px" width="13" height="12" viewBox="0 0 13 12" ><path d="M0 1 H5 M0 4 H3.5 M0 7 H3" stroke="#6e6e6e" stroke-width="1.2"/><circle cx="7.5" cy="6" r="3" fill="none" stroke="#6e6e6e" stroke-width="1.3"/><path d="M9.6 8.4 L12.3 11.3" stroke="#6e6e6e" stroke-width="1.5"/></svg>
<span style="left:1700px;top:985.8px;font-size:12px;line-height:12px;color:#000;letter-spacing:-0.23px;">Layout Inspector</span>
<svg style="left:6.5px;top:1005px" width="13" height="13" viewBox="0 0 13 13" ><rect x="3.5" y="0.5" width="9" height="9" fill="none" stroke="#6e6e6e" stroke-width="1"/><path d="M0.5 3 V12.5 H10" fill="none" stroke="#6e6e6e" stroke-width="1"/></svg>
<span style="left:28px;top:1005.8px;font-size:12px;line-height:12px;color:#000;letter-spacing:-0.19px;">Launch succeeded (today 3:37 PM)</span>
<svg style="left:1770px;top:1005.5px" width="11.5" height="11.5" viewBox="0 0 11.5 11.5" ><path d="M1.2 6 V3.6 A2.5 2.5 0 0 1 6 2.8" fill="none" stroke="#6e6e6e" stroke-width="1.7"/><rect x="3.4" y="5.4" width="8" height="5.8" fill="#6e6e6e"/></svg>
<svg style="left:1794.5px;top:1005px" width="12" height="11" viewBox="0 0 12 11" ><path d="M0.6 0 H11.4 Q12 0 12 0.6 V8 H11.6 V10.6 L8.8 8.4 H0.6 Q0 8.4 0 7.8 V0.6 Q0 0 0.6 0 Z" fill="#6e6e6e"/><rect x="5.2" y="1.5" width="1.6" height="3.6" fill="#f2f2f2"/><rect x="5.2" y="6" width="1.6" height="1.4" fill="#f2f2f2"/></svg>
<div style="left:1555.5px;top:921.3px;width:228.3px;height:80.8px;background:rgba(160,160,160,0.62)"></div>
<span style="left:1585.3px;top:914.8px;font-size:86px;line-height:86px;letter-spacing:-1.6px;color:#fff;white-space:pre">dir.by</span>
<div style="left:0px;top:0px;width:1820px;height:1px;background:#6a6a6a"></div>
<div style="left:0px;top:0px;width:1px;height:1023px;background:#6a6a6a"></div>
<div style="left:1819px;top:0px;width:1px;height:1023px;background:#6a6a6a"></div>
<div style="left:0px;top:1022px;width:1820px;height:1px;background:#6a6a6a"></div>
</div></body></html>
